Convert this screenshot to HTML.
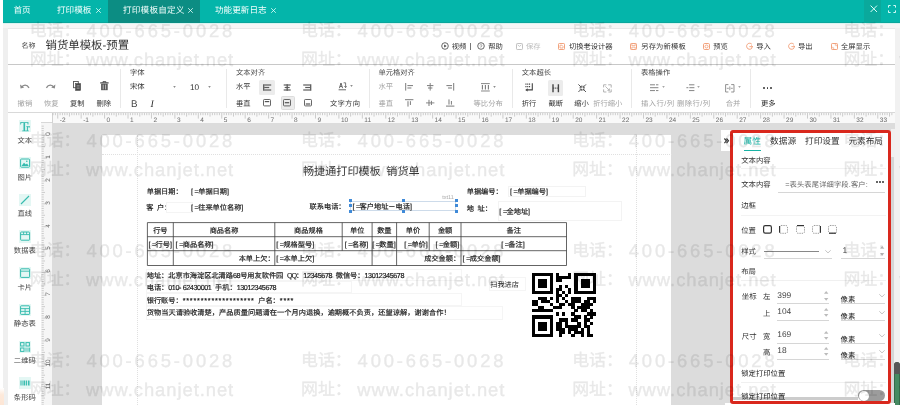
<!DOCTYPE html>
<html lang="zh-CN"><head><meta charset="utf-8"><title>print template designer</title>
<style>
html,body{margin:0;padding:0}
body{width:900px;height:405px;overflow:hidden;position:relative;background:#fff;font-family:"Liberation Sans",sans-serif;-webkit-font-smoothing:antialiased;text-rendering:geometricPrecision}
.t{position:absolute;white-space:nowrap;font-family:"Liberation Sans",sans-serif}
.b{position:absolute;box-sizing:border-box}
svg{overflow:visible}
#wrap{position:absolute;left:0;top:0;width:900px;height:405px;overflow:hidden;will-change:transform;opacity:0.999}
</style></head><body><div id="wrap">

<div class="b" style="left:3.00px;top:22.00px;width:897.00px;height:10.00px;background:#f6f6f6;"></div>
<div class="b" style="left:3.00px;top:28.00px;width:5.40px;height:377.00px;background:#efefef;"></div>
<div class="b" style="left:895.00px;top:28.00px;width:5.00px;height:377.00px;background:#f1f1f1;"></div>
<div class="b" style="left:3.00px;top:22.00px;width:897.00px;height:1.60px;background:#d8f4f1;"></div>
<div class="b" style="left:3.00px;top:0.00px;width:897.00px;height:22.60px;background:#04b5aa;"></div>
<div class="b" style="left:3.00px;top:21.70px;width:897.00px;height:0.90px;background:#0aa69b;"></div>
<div class="b" style="left:108.00px;top:0.00px;width:92.00px;height:22.60px;background:#0c8d83;"></div>
<div class="b" style="left:864.00px;top:0.00px;width:17.00px;height:22.60px;background:#0aa99c;"></div>
<span class="t" style="left:13.50px;top:4.48px;font-size:8.6px;line-height:12.04px;color:#f2fffd;">首页</span>
<span class="t" style="left:57.00px;top:4.48px;font-size:8.6px;line-height:12.04px;color:#f2fffd;">打印模板</span>
<svg class="b" style="left:96.10px;top:8.10px;" width="5" height="5" viewBox="0 0 5 5"><path d="M0.2 0.2 L4.8 4.8 M4.8 0.2 L0.2 4.8" stroke="#e4fffb" stroke-width="0.8" fill="none"/></svg>
<span class="t" style="left:123.00px;top:4.48px;font-size:8.6px;line-height:12.04px;color:#f2fffd;letter-spacing:0.2px;">打印模板自定义</span>
<svg class="b" style="left:187.80px;top:8.10px;" width="5" height="5" viewBox="0 0 5 5"><path d="M0.2 0.2 L4.8 4.8 M4.8 0.2 L0.2 4.8" stroke="#e4fffb" stroke-width="0.8" fill="none"/></svg>
<span class="t" style="left:215.00px;top:4.48px;font-size:8.6px;line-height:12.04px;color:#f2fffd;">功能更新日志</span>
<svg class="b" style="left:270.90px;top:8.10px;" width="5" height="5" viewBox="0 0 5 5"><path d="M0.2 0.2 L4.8 4.8 M4.8 0.2 L0.2 4.8" stroke="#e4fffb" stroke-width="0.8" fill="none"/></svg>
<svg class="b" style="left:869.60px;top:5.00px;" width="7.6" height="7.6" viewBox="0 0 7.6 7.6"><path d="M0.6 0.6 L7 7 M7 0.6 L0.6 7" stroke="#dcfffa" stroke-width="1" fill="none"/></svg>
<svg class="b" style="left:888.00px;top:4.60px;" width="8" height="8" viewBox="0 0 8 8"><path d="M0.5 2.6 V0.5 H2.6 M5.4 0.5 H7.5 V2.6 M7.5 5.4 V7.5 H5.4 M2.6 7.5 H0.5 V5.4" stroke="#d4fbf6" stroke-width="1" fill="none"/></svg>
<div class="b" style="left:8.00px;top:28.00px;width:887.00px;height:36.00px;background:#fff;border-top:1px solid #e9e9e9;"></div>
<span class="t" style="left:21.50px;top:42.40px;font-size:7px;line-height:9.8px;color:#444;">名称</span>
<span class="t" style="left:45.50px;top:39.12px;font-size:11.4px;line-height:15.96px;color:#333;">销货单模板-预置</span>
<svg class="b" style="left:441.00px;top:42.40px;" width="8" height="8" viewBox="0 0 8 8"><circle cx="4" cy="4" r="3.3" fill="none" stroke="#444" stroke-width="0.8"/><path d="M3.2 2.4 L5.6 4 L3.2 5.6 Z" fill="#444"/></svg>
<span class="t" style="left:451.80px;top:41.99px;font-size:7.3px;line-height:10.22px;color:#333;">视频</span>
<div class="b" style="left:470.30px;top:43.00px;width:0.90px;height:7.00px;background:#777;"></div>
<svg class="b" style="left:477.00px;top:42.40px;" width="8" height="8" viewBox="0 0 8 8"><circle cx="4" cy="4" r="3.3" fill="none" stroke="#444" stroke-width="0.8"/><text x="4" y="6" font-size="5.2" text-anchor="middle" font-family="Liberation Sans" fill="#444">?</text></svg>
<span class="t" style="left:488.20px;top:41.99px;font-size:7.3px;line-height:10.22px;color:#333;">帮助</span>
<svg class="b" style="left:515.50px;top:43.00px;" width="7" height="7" viewBox="0 0 7 7"><rect x="0.5" y="0.5" width="6" height="6" rx="0.8" fill="none" stroke="#bbb" stroke-width="0.9"/><path d="M1.6 1.8 L3.5 3.4 L5.4 1.8" fill="none" stroke="#bbb" stroke-width="0.8"/></svg>
<span class="t" style="left:526.00px;top:41.99px;font-size:7.3px;line-height:10.22px;color:#bbb;">保存</span>
<svg class="b" style="left:558.40px;top:43.00px;" width="7" height="7" viewBox="0 0 7 7"><rect x="0.5" y="0.5" width="6" height="6" rx="0.8" fill="none" stroke="#f1986f" stroke-width="0.9"/><path d="M2 2.2 H4 L5 3.2 V5 H2 Z" fill="none" stroke="#f1986f" stroke-width="0.7"/></svg>
<span class="t" style="left:568.90px;top:41.99px;font-size:7.3px;line-height:10.22px;color:#333;">切换老设计器</span>
<svg class="b" style="left:630.30px;top:43.00px;" width="7" height="7" viewBox="0 0 7 7"><rect x="0.5" y="0.5" width="6" height="6" rx="0.8" fill="none" stroke="#f1986f" stroke-width="0.9"/><path d="M1.8 0.8 V2.6 H5.2 V0.8 M1.8 6.2 V4.2 H5.2 V6.2" fill="none" stroke="#f1986f" stroke-width="0.7"/></svg>
<span class="t" style="left:641.20px;top:41.99px;font-size:7.3px;line-height:10.22px;color:#333;letter-spacing:0.15px;">另存为新模板</span>
<svg class="b" style="left:703.40px;top:43.00px;" width="7" height="7" viewBox="0 0 7 7"><rect x="0.5" y="0.5" width="6" height="6" rx="1.2" fill="none" stroke="#f1986f" stroke-width="0.9"/><circle cx="3.5" cy="3.5" r="1.5" fill="none" stroke="#f1986f" stroke-width="0.8"/></svg>
<span class="t" style="left:713.30px;top:41.99px;font-size:7.3px;line-height:10.22px;color:#333;">预览</span>
<svg class="b" style="left:746.00px;top:43.00px;" width="7" height="7" viewBox="0 0 7 7"><path d="M5.8 1.2 A3 3 0 1 0 6.3 4.6" fill="none" stroke="#f1986f" stroke-width="0.9"/><path d="M3.4 3.6 H6.6 M5.3 2.4 L6.6 3.6 L5.3 4.8" fill="none" stroke="#f1986f" stroke-width="0.8"/></svg>
<span class="t" style="left:756.30px;top:41.99px;font-size:7.3px;line-height:10.22px;color:#333;">导入</span>
<svg class="b" style="left:788.00px;top:43.00px;" width="7" height="7" viewBox="0 0 7 7"><path d="M5.8 1.2 A3 3 0 1 0 6.3 4.6" fill="none" stroke="#f1986f" stroke-width="0.9"/><path d="M3.4 3.6 H6.8 M5.5 2.4 L6.8 3.6 L5.5 4.8" fill="none" stroke="#f1986f" stroke-width="0.8"/></svg>
<span class="t" style="left:798.00px;top:41.99px;font-size:7.3px;line-height:10.22px;color:#333;">导出</span>
<svg class="b" style="left:831.00px;top:43.00px;" width="7" height="7" viewBox="0 0 7 7"><rect x="0.5" y="0.5" width="6" height="6" rx="0.8" fill="none" stroke="#f1986f" stroke-width="0.9"/><path d="M3.8 1.8 H5.2 V3.2 M3.2 5.2 H1.8 V3.8" fill="none" stroke="#f1986f" stroke-width="0.7"/></svg>
<span class="t" style="left:841.00px;top:41.99px;font-size:7.3px;line-height:10.22px;color:#333;">全屏显示</span>
<div class="b" style="left:8.00px;top:64.00px;width:887.00px;height:48.50px;background:#fff;border-top:1px solid #c8c8c8;border-bottom:1px solid #d9d9d9;"></div>
<div class="b" style="left:120.00px;top:69.00px;width:1.00px;height:39.00px;background:#e9e9e9;"></div>
<div class="b" style="left:226.00px;top:69.00px;width:1.00px;height:39.00px;background:#e9e9e9;"></div>
<div class="b" style="left:368.50px;top:69.00px;width:1.00px;height:39.00px;background:#e9e9e9;"></div>
<div class="b" style="left:512.00px;top:69.00px;width:1.00px;height:39.00px;background:#e9e9e9;"></div>
<div class="b" style="left:631.20px;top:69.00px;width:1.00px;height:39.00px;background:#e9e9e9;"></div>
<div class="b" style="left:750.20px;top:69.00px;width:1.00px;height:39.00px;background:#e9e9e9;"></div>
<svg class="b" style="left:20.40px;top:83.00px;" width="9.4" height="6" viewBox="0 0 9.4 6"><path d="M1.6 4.6 C3 1.4 7 1.2 9 4.8" fill="none" stroke="#8a8a8a" stroke-width="1.35"/><path d="M0 1.4 L0.6 5.6 L4.2 4.4 Z" fill="#8a8a8a"/></svg>
<svg class="b" style="left:46.40px;top:83.00px;" width="9.4" height="6" viewBox="0 0 9.4 6"><path d="M7.8 4.6 C6.4 1.4 2.4 1.2 0.4 4.8" fill="none" stroke="#8a8a8a" stroke-width="1.35"/><path d="M9.4 1.4 L8.8 5.6 L5.2 4.4 Z" fill="#8a8a8a"/></svg>
<svg class="b" style="left:73.20px;top:80.80px;" width="8" height="9.8" viewBox="0 0 8 9.8"><rect x="0.5" y="0.5" width="4.8" height="6.2" fill="#fff" stroke="#555" stroke-width="0.9"/><rect x="2.6" y="2.6" width="5" height="6.8" fill="#4a4a4a" stroke="#4a4a4a" stroke-width="0.6"/><path d="M3.6 4.6 H6.6 M3.6 6 H6.6 M3.6 7.4 H6.6" stroke="#ccc" stroke-width="0.5"/></svg>
<svg class="b" style="left:99.80px;top:81.20px;" width="8.8" height="9.4" viewBox="0 0 8.8 9.4"><path d="M0.2 1.9 H8.6" stroke="#333" stroke-width="1.1"/><path d="M3 1.6 V0.6 H5.8 V1.6" fill="none" stroke="#333" stroke-width="0.8"/><path d="M1.1 2.8 H7.7 V9.2 H1.1 Z" fill="#555"/><path d="M3.2 3.6 V8.4 M5.6 3.6 V8.4" stroke="#e8e8e8" stroke-width="0.7"/></svg>
<span class="t" style="left:17.60px;top:98.69px;font-size:7.3px;line-height:10.22px;color:#a2a2a2;">撤销</span>
<span class="t" style="left:44.00px;top:98.69px;font-size:7.3px;line-height:10.22px;color:#a2a2a2;">恢复</span>
<span class="t" style="left:70.00px;top:98.69px;font-size:7.3px;line-height:10.22px;color:#333;">复制</span>
<span class="t" style="left:96.50px;top:98.69px;font-size:7.3px;line-height:10.22px;color:#333;">删除</span>
<span class="t" style="left:130.00px;top:67.99px;font-size:7.3px;line-height:10.22px;color:#444;">字体</span>
<span class="t" style="left:130.00px;top:82.19px;font-size:7.3px;line-height:10.22px;color:#333;">宋体</span>
<svg class="b" style="left:173.10px;top:85.90px;" width="3" height="2" viewBox="0 0 3 2"><path d="M0.2 0.2 H2.8 L1.5 1.8 Z" fill="#666"/></svg>
<span class="t" style="left:190.00px;top:81.56px;font-size:8.2px;line-height:11.48px;color:#333;">10</span>
<svg class="b" style="left:207.90px;top:85.90px;" width="3" height="2" viewBox="0 0 3 2"><path d="M0.2 0.2 H2.8 L1.5 1.8 Z" fill="#666"/></svg>
<span class="t" style="left:131.00px;top:97.74px;font-size:9.8px;line-height:13.72px;color:#444;">B</span>
<span class="t" style="left:150.40px;top:97.60px;font-size:10px;line-height:14.0px;color:#333;font-family:'Liberation Serif',serif;font-style:italic;">I</span>
<span class="t" style="left:236.00px;top:67.99px;font-size:7.3px;line-height:10.22px;color:#444;">文本对齐</span>
<span class="t" style="left:236.00px;top:82.19px;font-size:7.3px;line-height:10.22px;color:#333;">水平</span>
<span class="t" style="left:236.00px;top:98.69px;font-size:7.3px;line-height:10.22px;color:#333;">垂直</span>
<div class="b" style="left:259.40px;top:79.60px;width:15.20px;height:15.00px;background:#ececec;border-radius:1.5px;"></div>
<div class="b" style="left:280.50px;top:95.50px;width:14.40px;height:14.40px;background:#ececec;border-radius:1.5px;border:0.5px solid #dcdcdc;"></div>
<svg class="b" style="left:262.80px;top:83.50px;" width="8.4" height="7" viewBox="0 0 8.4 7"><path d="M1.2 1.0 H8.2" stroke="#5c5c5c" stroke-width="1.2"/><path d="M1.2 3.5 H6.2" stroke="#5c5c5c" stroke-width="1.2"/><path d="M1.2 6.0 H8.2" stroke="#5c5c5c" stroke-width="1.2"/><path d="M0.7 0.2 V6.8" stroke="#5c5c5c" stroke-width="1.3"/></svg>
<svg class="b" style="left:283.00px;top:83.50px;" width="8.4" height="7" viewBox="0 0 8.4 7"><path d="M0.7 1.0 H7.7" stroke="#5c5c5c" stroke-width="1.2"/><path d="M1.7 3.5 H6.7" stroke="#5c5c5c" stroke-width="1.2"/><path d="M0.7 6.0 H7.7" stroke="#5c5c5c" stroke-width="1.2"/><path d="M4.2 0.2 V6.8" stroke="#5c5c5c" stroke-width="1.3"/></svg>
<svg class="b" style="left:303.00px;top:83.50px;" width="8.4" height="7" viewBox="0 0 8.4 7"><path d="M0.2 1.0 H7.2" stroke="#5c5c5c" stroke-width="1.2"/><path d="M2.2 3.5 H7.2" stroke="#5c5c5c" stroke-width="1.2"/><path d="M0.2 6.0 H7.2" stroke="#5c5c5c" stroke-width="1.2"/><path d="M7.7 0.2 V6.8" stroke="#5c5c5c" stroke-width="1.3"/></svg>
<svg class="b" style="left:262.80px;top:99.40px;" width="8" height="7.4" viewBox="0 0 8 7.4"><rect x="0.5" y="0.5" width="7" height="6.4" rx="0.8" fill="none" stroke="#555" stroke-width="0.9"/><path d="M1.8 2.6 H6.2" stroke="#555" stroke-width="1.2"/></svg>
<svg class="b" style="left:283.00px;top:99.40px;" width="8" height="7.4" viewBox="0 0 8 7.4"><rect x="0.5" y="0.5" width="7" height="6.4" rx="0.8" fill="none" stroke="#555" stroke-width="0.9"/><path d="M1.8 3.7 H6.2" stroke="#555" stroke-width="1.2"/></svg>
<svg class="b" style="left:303.60px;top:99.40px;" width="8" height="7.4" viewBox="0 0 8 7.4"><rect x="0.5" y="0.5" width="7" height="6.4" rx="0.8" fill="none" stroke="#555" stroke-width="0.9"/><path d="M1.8 5.0 H6.2" stroke="#555" stroke-width="1.2"/></svg>
<svg class="b" style="left:337.80px;top:82.20px;" width="8.6" height="8.6" viewBox="0 0 8.6 8.6"><path d="M0.6 7.8 H8 M1.4 6.2 L3 1 L4.6 6.2 M2 4.4 H4" fill="none" stroke="#444" stroke-width="0.8"/><path d="M5.6 0.8 H7.6 V5.4 M6.4 4.2 L7.6 5.6 L8.6 4.2" fill="none" stroke="#444" stroke-width="0.7"/></svg>
<svg class="b" style="left:349.50px;top:84.90px;" width="3" height="2" viewBox="0 0 3 2"><path d="M0.2 0.2 H2.8 L1.5 1.8 Z" fill="#666"/></svg>
<span class="t" style="left:330.00px;top:98.69px;font-size:7.3px;line-height:10.22px;color:#333;letter-spacing:0.25px;">文字方向</span>
<span class="t" style="left:378.40px;top:67.99px;font-size:7.3px;line-height:10.22px;color:#444;">单元格对齐</span>
<span class="t" style="left:378.40px;top:82.19px;font-size:7.3px;line-height:10.22px;color:#a2a2a2;">水平</span>
<span class="t" style="left:378.40px;top:98.69px;font-size:7.3px;line-height:10.22px;color:#a2a2a2;">垂直</span>
<svg class="b" style="left:405.30px;top:83.40px;" width="8.4" height="7.6" viewBox="0 0 8.4 7.6"><path d="M0.7 0 V7.6" stroke="#7a7a7a" stroke-width="1"/><path d="M2.4 2.6 H8 M2.4 5 H6.4" stroke="#7a7a7a" stroke-width="1"/></svg>
<svg class="b" style="left:425.80px;top:83.40px;" width="8.4" height="7.6" viewBox="0 0 8.4 7.6"><path d="M4.2 0 V7.6" stroke="#7a7a7a" stroke-width="0.9"/><path d="M1 2.6 H7.4 M2 5 H6.4" stroke="#7a7a7a" stroke-width="1"/></svg>
<svg class="b" style="left:446.20px;top:83.40px;" width="8.4" height="7.6" viewBox="0 0 8.4 7.6"><path d="M7.7 0 V7.6" stroke="#7a7a7a" stroke-width="1"/><path d="M0.4 2.6 H6 M2 5 H6" stroke="#7a7a7a" stroke-width="1"/></svg>
<svg class="b" style="left:405.30px;top:99.20px;" width="8.4" height="7.8" viewBox="0 0 8.4 7.8"><path d="M0 0.7 H8.4" stroke="#7a7a7a" stroke-width="1"/><path d="M3 2.2 V7.6 M5.4 2.2 V6" stroke="#7a7a7a" stroke-width="1"/></svg>
<svg class="b" style="left:425.80px;top:99.20px;" width="8.4" height="7.8" viewBox="0 0 8.4 7.8"><path d="M0 3.9 H8.4" stroke="#7a7a7a" stroke-width="0.9"/><path d="M3 0.8 V7 M5.4 1.8 V6" stroke="#7a7a7a" stroke-width="1"/></svg>
<svg class="b" style="left:446.20px;top:99.20px;" width="8.4" height="7.8" viewBox="0 0 8.4 7.8"><path d="M0 7.1 H8.4" stroke="#7a7a7a" stroke-width="1"/><path d="M3 0.4 V5.6 M5.4 2 V5.6" stroke="#7a7a7a" stroke-width="1"/></svg>
<svg class="b" style="left:481.00px;top:83.00px;" width="8.8" height="8.6" viewBox="0 0 8.8 8.6"><path d="M0 0.6 H8.8 M0 8 H8.8" stroke="#7a7a7a" stroke-width="0.9"/><path d="M1.4 2 V6.6 M4.4 2 V6.6 M7.4 2 V6.6" stroke="#7a7a7a" stroke-width="1.1"/></svg>
<svg class="b" style="left:492.90px;top:85.90px;" width="3" height="2" viewBox="0 0 3 2"><path d="M0.2 0.2 H2.8 L1.5 1.8 Z" fill="#666"/></svg>
<span class="t" style="left:473.40px;top:98.69px;font-size:7.3px;line-height:10.22px;color:#a2a2a2;letter-spacing:0.1px;">等比分布</span>
<span class="t" style="left:521.80px;top:67.99px;font-size:7.3px;line-height:10.22px;color:#444;">文本超长</span>
<svg class="b" style="left:524.70px;top:83.20px;" width="8.8" height="8.8" viewBox="0 0 8.8 8.8"><path d="M0.4 1.2 H5.4 M0.4 3.6 H5.4" fill="none" stroke="#444" stroke-width="1.2" stroke-dasharray="1.1 0.7"/><path d="M7.3 0.2 V6.9 H1.6" fill="none" stroke="#444" stroke-width="1.1"/><path d="M2.6 5.2 L0.2 6.9 L2.6 8.6 Z" fill="#444"/></svg>
<div class="b" style="left:547.90px;top:79.80px;width:15.20px;height:16.20px;background:#ececec;border-radius:1.5px;"></div>
<svg class="b" style="left:551.70px;top:83.70px;" width="7.4" height="8.4" viewBox="0 0 7.4 8.4"><path d="M1 0.2 V8.2 M6.4 0.2 V8.2" stroke="#444" stroke-width="1.4"/><path d="M1 4.1 H6.4" stroke="#444" stroke-width="1" stroke-dasharray="1.2 0.6"/></svg>
<svg class="b" style="left:577.50px;top:83.90px;" width="8.4" height="8.4" viewBox="0 0 8.4 8.4"><path d="M0.4 0.4 L3.2 3.2 M8 0.4 L5.2 3.2 M0.4 8 L3.2 5.2 M8 8 L5.2 5.2" stroke="#444" stroke-width="0.9"/><path d="M1.6 3.4 H3.4 V1.6 M6.8 3.4 H5 V1.6 M1.6 5 H3.4 V6.8 M6.8 5 H5 V6.8" fill="none" stroke="#444" stroke-width="0.8"/></svg>
<svg class="b" style="left:603.40px;top:83.50px;" width="9" height="9" viewBox="0 0 9 9"><path d="M0.6 3.4 V0.8 H3.4 M5.2 0.8 H8.2 V3.6 M8.2 5.4 V8 H5.4 M3.4 8 H0.6 V5.4" fill="none" stroke="#aaa" stroke-width="0.9"/><path d="M2.4 2.4 L6.4 6.4 M6.4 4.4 V6.4 H4.4" fill="none" stroke="#aaa" stroke-width="0.8"/></svg>
<span class="t" style="left:521.80px;top:98.69px;font-size:7.3px;line-height:10.22px;color:#333;">折行</span>
<span class="t" style="left:548.40px;top:98.69px;font-size:7.3px;line-height:10.22px;color:#333;">截断</span>
<span class="t" style="left:574.20px;top:98.69px;font-size:7.3px;line-height:10.22px;color:#333;">缩小</span>
<span class="t" style="left:593.20px;top:98.69px;font-size:7.3px;line-height:10.22px;color:#a2a2a2;">折行缩小</span>
<span class="t" style="left:641.00px;top:67.99px;font-size:7.3px;line-height:10.22px;color:#444;">表格操作</span>
<svg class="b" style="left:650.20px;top:83.60px;" width="8.6" height="7.4" viewBox="0 0 8.6 7.4"><path d="M0 0.8 H5 M6 0.8 H8.4 M0 3.7 H8.4 M0 6.6 H5 M6 6.6 H8.4" stroke="#858585" stroke-width="1"/></svg>
<svg class="b" style="left:662.10px;top:86.30px;" width="3" height="2" viewBox="0 0 3 2"><path d="M0.2 0.2 H2.8 L1.5 1.8 Z" fill="#888"/></svg>
<svg class="b" style="left:686.30px;top:83.60px;" width="8.6" height="7.4" viewBox="0 0 8.6 7.4"><path d="M3 0.8 H8.4 M0.4 3.7 H2.4 M3.4 3.7 H8.4 M3 6.6 H8.4" stroke="#858585" stroke-width="1"/></svg>
<svg class="b" style="left:697.10px;top:86.30px;" width="3" height="2" viewBox="0 0 3 2"><path d="M0.2 0.2 H2.8 L1.5 1.8 Z" fill="#888"/></svg>
<svg class="b" style="left:725.00px;top:84.10px;" width="9.6" height="8.6" viewBox="0 0 9.6 8.6"><path d="M3.4 0.6 H0.6 V8 H3.4 M6.2 0.6 H9 V8 H6.2" fill="none" stroke="#858585" stroke-width="0.9"/><path d="M1.8 4.3 H3.8 M5.8 4.3 H7.8 M4.8 2.4 V6.2" stroke="#858585" stroke-width="0.8"/></svg>
<svg class="b" style="left:737.70px;top:86.30px;" width="3" height="2" viewBox="0 0 3 2"><path d="M0.2 0.2 H2.8 L1.5 1.8 Z" fill="#888"/></svg>
<span class="t" style="left:641.00px;top:98.69px;font-size:7.3px;line-height:10.22px;color:#a2a2a2;letter-spacing:0.45px;">插入行/列</span>
<span class="t" style="left:677.00px;top:98.69px;font-size:7.3px;line-height:10.22px;color:#a2a2a2;letter-spacing:0.45px;">删除行/列</span>
<span class="t" style="left:725.80px;top:98.69px;font-size:7.3px;line-height:10.22px;color:#a2a2a2;">合并</span>
<div class="b" style="left:763.00px;top:87.00px;width:1.60px;height:1.60px;background:#333;border-radius:1px;"></div>
<div class="b" style="left:766.70px;top:87.00px;width:1.60px;height:1.60px;background:#333;border-radius:1px;"></div>
<div class="b" style="left:770.40px;top:87.00px;width:1.60px;height:1.60px;background:#333;border-radius:1px;"></div>
<span class="t" style="left:761.00px;top:98.69px;font-size:7.3px;line-height:10.22px;color:#222;">更多</span>
<div class="b" style="left:0.00px;top:388.00px;width:3.60px;height:17.00px;background:linear-gradient(to bottom,#ffffff,#fde9da 40%,#fde6d5);"></div>
<div class="b" style="left:8.00px;top:113.00px;width:33.00px;height:292.00px;background:#fff;"></div>
<div class="b" style="left:18.80px;top:120.20px;width:12.40px;height:12.20px;background:#e4f7f4;"></div>
<svg class="b" style="left:19.80px;top:121.20px;" width="10" height="10" viewBox="0 0 10 10"><text x="0.2" y="10.2" font-family="Liberation Serif" font-size="13.4" fill="#35bbae" stroke="#35bbae" stroke-width="0.25">T</text><text x="6.2" y="10.2" font-family="Liberation Serif" font-size="10.2" fill="#35bbae" stroke="#35bbae" stroke-width="0.3">r</text></svg>
<span class="t" style="left:24.80px;top:135.79px;font-size:7.3px;line-height:10.22px;color:#444;transform:translateX(-50%);">文本</span>
<div class="b" style="left:18.80px;top:156.92px;width:12.40px;height:12.20px;background:#e4f7f4;"></div>
<svg class="b" style="left:19.80px;top:157.92px;" width="10" height="10" viewBox="0 0 10 10"><rect x="0.6" y="1" width="9" height="8.2" rx="0.8" fill="none" stroke="#35bbae" stroke-width="1"/><path d="M1.4 8 L4 4.8 L5.8 6.6 L7 5.4 L8.8 8 Z" fill="#35bbae"/><circle cx="6.8" cy="3.2" r="0.8" fill="#35bbae"/></svg>
<span class="t" style="left:24.80px;top:172.51px;font-size:7.3px;line-height:10.22px;color:#444;transform:translateX(-50%);">图片</span>
<div class="b" style="left:18.80px;top:193.64px;width:12.40px;height:12.20px;background:#e4f7f4;"></div>
<svg class="b" style="left:19.80px;top:194.64px;" width="10" height="10" viewBox="0 0 10 10"><path d="M1 9 L9 1" stroke="#35bbae" stroke-width="1.1"/></svg>
<span class="t" style="left:24.80px;top:209.23px;font-size:7.3px;line-height:10.22px;color:#444;transform:translateX(-50%);">直线</span>
<div class="b" style="left:18.80px;top:230.36px;width:12.40px;height:12.20px;background:#e4f7f4;"></div>
<svg class="b" style="left:19.80px;top:231.36px;" width="10" height="10" viewBox="0 0 10 10"><rect x="0.6" y="1" width="9" height="8.2" rx="0.6" fill="none" stroke="#35bbae" stroke-width="1"/><path d="M0.6 3.6 H9.6 M3.6 1 V3.6 M6.6 1 V3.6" stroke="#35bbae" stroke-width="0.9"/></svg>
<span class="t" style="left:24.80px;top:245.95px;font-size:7.3px;line-height:10.22px;color:#444;transform:translateX(-50%);">数据表</span>
<div class="b" style="left:18.80px;top:267.08px;width:12.40px;height:12.20px;background:#e4f7f4;"></div>
<svg class="b" style="left:19.80px;top:268.08px;" width="10" height="10" viewBox="0 0 10 10"><rect x="0.6" y="0.8" width="9" height="8.6" rx="0.6" fill="none" stroke="#35bbae" stroke-width="1"/><path d="M0.6 3.2 H9.6" stroke="#35bbae" stroke-width="0.9"/></svg>
<span class="t" style="left:24.80px;top:282.67px;font-size:7.3px;line-height:10.22px;color:#444;transform:translateX(-50%);">卡片</span>
<div class="b" style="left:18.80px;top:303.80px;width:12.40px;height:12.20px;background:#e4f7f4;"></div>
<svg class="b" style="left:19.80px;top:304.80px;" width="10" height="10" viewBox="0 0 10 10"><rect x="0.6" y="0.8" width="9" height="8.6" rx="0.6" fill="none" stroke="#35bbae" stroke-width="1"/><path d="M0.6 3.6 H9.6 M0.6 6.4 H9.6 M5.1 3.6 V9.4" stroke="#35bbae" stroke-width="0.9"/></svg>
<span class="t" style="left:24.80px;top:319.39px;font-size:7.3px;line-height:10.22px;color:#444;transform:translateX(-50%);">静态表</span>
<div class="b" style="left:18.80px;top:340.52px;width:12.40px;height:12.20px;background:#e4f7f4;"></div>
<svg class="b" style="left:19.80px;top:341.52px;" width="10" height="10" viewBox="0 0 10 10"><rect x="0.6" y="0.6" width="3.4" height="3.4" fill="none" stroke="#35bbae" stroke-width="1"/><rect x="6" y="0.6" width="3.4" height="3.4" fill="none" stroke="#35bbae" stroke-width="1"/><rect x="0.6" y="6" width="3.4" height="3.4" fill="none" stroke="#35bbae" stroke-width="1"/><path d="M6 5.6 V9.8 M8 5.6 V9.8 M9.6 5.6 V9.8" stroke="#35bbae" stroke-width="0.9"/></svg>
<span class="t" style="left:24.80px;top:356.11px;font-size:7.3px;line-height:10.22px;color:#444;transform:translateX(-50%);">二维码</span>
<div class="b" style="left:18.80px;top:377.24px;width:12.40px;height:12.20px;background:#e4f7f4;"></div>
<svg class="b" style="left:19.80px;top:378.24px;" width="10" height="10" viewBox="0 0 10 10"><path d="M1 2.6 V7.6 M3 2.6 V7.6 M4.6 2.6 V7.6 M6.4 2.6 V7.6 M8.4 2.6 V7.6" stroke="#35bbae" stroke-width="1.1"/><path d="M9.6 2.6 V7.6" stroke="#35bbae" stroke-width="0.6"/></svg>
<span class="t" style="left:24.80px;top:392.83px;font-size:7.3px;line-height:10.22px;color:#444;transform:translateX(-50%);">条形码</span>
<div class="b" style="left:52.00px;top:112.50px;width:843.00px;height:10.90px;background:#f9f9f9;"></div>
<div class="b" style="left:41.00px;top:122.60px;width:11.20px;height:283.00px;background:#f6f6f6;"></div>
<div class="b" style="left:51.60px;top:113.00px;width:0.70px;height:10.30px;background:#d2d2d2;"></div>
<div class="b" style="left:41.00px;top:122.30px;width:11.00px;height:0.70px;background:#d8d8d8;"></div>
<svg class="b" style="left:0.00px;top:0.00px;" width="900" height="124" viewBox="0 0 900 124"><path d="M53.05 113 v2.2 M55.40 113 v2.2 M57.74 113 v5.6 M60.08 113 v2.2 M62.43 113 v2.2 M64.77 113 v2.2 M67.11 113 v2.2 M69.45 113 v3.6 M71.80 113 v2.2 M74.14 113 v2.2 M76.48 113 v2.2 M78.83 113 v2.2 M81.17 113 v5.6 M83.51 113 v2.2 M85.86 113 v2.2 M88.20 113 v2.2 M90.54 113 v2.2 M92.88 113 v3.6 M95.23 113 v2.2 M97.57 113 v2.2 M99.91 113 v2.2 M102.26 113 v2.2 M104.60 113 v5.6 M106.94 113 v2.2 M109.29 113 v2.2 M111.63 113 v2.2 M113.97 113 v2.2 M116.31 113 v3.6 M118.66 113 v2.2 M121.00 113 v2.2 M123.34 113 v2.2 M125.69 113 v2.2 M128.03 113 v5.6 M130.37 113 v2.2 M132.72 113 v2.2 M135.06 113 v2.2 M137.40 113 v2.2 M139.75 113 v3.6 M142.09 113 v2.2 M144.43 113 v2.2 M146.77 113 v2.2 M149.12 113 v2.2 M151.46 113 v5.6 M153.80 113 v2.2 M156.15 113 v2.2 M158.49 113 v2.2 M160.83 113 v2.2 M163.18 113 v3.6 M165.52 113 v2.2 M167.86 113 v2.2 M170.20 113 v2.2 M172.55 113 v2.2 M174.89 113 v5.6 M177.23 113 v2.2 M179.58 113 v2.2 M181.92 113 v2.2 M184.26 113 v2.2 M186.60 113 v3.6 M188.95 113 v2.2 M191.29 113 v2.2 M193.63 113 v2.2 M195.98 113 v2.2 M198.32 113 v5.6 M200.66 113 v2.2 M203.01 113 v2.2 M205.35 113 v2.2 M207.69 113 v2.2 M210.03 113 v3.6 M212.38 113 v2.2 M214.72 113 v2.2 M217.06 113 v2.2 M219.41 113 v2.2 M221.75 113 v5.6 M224.09 113 v2.2 M226.44 113 v2.2 M228.78 113 v2.2 M231.12 113 v2.2 M233.47 113 v3.6 M235.81 113 v2.2 M238.15 113 v2.2 M240.49 113 v2.2 M242.84 113 v2.2 M245.18 113 v5.6 M247.52 113 v2.2 M249.87 113 v2.2 M252.21 113 v2.2 M254.55 113 v2.2 M256.89 113 v3.6 M259.24 113 v2.2 M261.58 113 v2.2 M263.92 113 v2.2 M266.27 113 v2.2 M268.61 113 v5.6 M270.95 113 v2.2 M273.30 113 v2.2 M275.64 113 v2.2 M277.98 113 v2.2 M280.32 113 v3.6 M282.67 113 v2.2 M285.01 113 v2.2 M287.35 113 v2.2 M289.70 113 v2.2 M292.04 113 v5.6 M294.38 113 v2.2 M296.73 113 v2.2 M299.07 113 v2.2 M301.41 113 v2.2 M303.75 113 v3.6 M306.10 113 v2.2 M308.44 113 v2.2 M310.78 113 v2.2 M313.13 113 v2.2 M315.47 113 v5.6 M317.81 113 v2.2 M320.16 113 v2.2 M322.50 113 v2.2 M324.84 113 v2.2 M327.18 113 v3.6 M329.53 113 v2.2 M331.87 113 v2.2 M334.21 113 v2.2 M336.56 113 v2.2 M338.90 113 v5.6 M341.24 113 v2.2 M343.59 113 v2.2 M345.93 113 v2.2 M348.27 113 v2.2 M350.62 113 v3.6 M352.96 113 v2.2 M355.30 113 v2.2 M357.64 113 v2.2 M359.99 113 v2.2 M362.33 113 v5.6 M364.67 113 v2.2 M367.02 113 v2.2 M369.36 113 v2.2 M371.70 113 v2.2 M374.04 113 v3.6 M376.39 113 v2.2 M378.73 113 v2.2 M381.07 113 v2.2 M383.42 113 v2.2 M385.76 113 v5.6 M388.10 113 v2.2 M390.45 113 v2.2 M392.79 113 v2.2 M395.13 113 v2.2 M397.48 113 v3.6 M399.82 113 v2.2 M402.16 113 v2.2 M404.50 113 v2.2 M406.85 113 v2.2 M409.19 113 v5.6 M411.53 113 v2.2 M413.88 113 v2.2 M416.22 113 v2.2 M418.56 113 v2.2 M420.90 113 v3.6 M423.25 113 v2.2 M425.59 113 v2.2 M427.93 113 v2.2 M430.28 113 v2.2 M432.62 113 v5.6 M434.96 113 v2.2 M437.31 113 v2.2 M439.65 113 v2.2 M441.99 113 v2.2 M444.34 113 v3.6 M446.68 113 v2.2 M449.02 113 v2.2 M451.36 113 v2.2 M453.71 113 v2.2 M456.05 113 v5.6 M458.39 113 v2.2 M460.74 113 v2.2 M463.08 113 v2.2 M465.42 113 v2.2 M467.76 113 v3.6 M470.11 113 v2.2 M472.45 113 v2.2 M474.79 113 v2.2 M477.14 113 v2.2 M479.48 113 v5.6 M481.82 113 v2.2 M484.17 113 v2.2 M486.51 113 v2.2 M488.85 113 v2.2 M491.19 113 v3.6 M493.54 113 v2.2 M495.88 113 v2.2 M498.22 113 v2.2 M500.57 113 v2.2 M502.91 113 v5.6 M505.25 113 v2.2 M507.60 113 v2.2 M509.94 113 v2.2 M512.28 113 v2.2 M514.62 113 v3.6 M516.97 113 v2.2 M519.31 113 v2.2 M521.65 113 v2.2 M524.00 113 v2.2 M526.34 113 v5.6 M528.68 113 v2.2 M531.03 113 v2.2 M533.37 113 v2.2 M535.71 113 v2.2 M538.06 113 v3.6 M540.40 113 v2.2 M542.74 113 v2.2 M545.08 113 v2.2 M547.43 113 v2.2 M549.77 113 v5.6 M552.11 113 v2.2 M554.46 113 v2.2 M556.80 113 v2.2 M559.14 113 v2.2 M561.49 113 v3.6 M563.83 113 v2.2 M566.17 113 v2.2 M568.51 113 v2.2 M570.86 113 v2.2 M573.20 113 v5.6 M575.54 113 v2.2 M577.89 113 v2.2 M580.23 113 v2.2 M582.57 113 v2.2 M584.91 113 v3.6 M587.26 113 v2.2 M589.60 113 v2.2 M591.94 113 v2.2 M594.29 113 v2.2 M596.63 113 v5.6 M598.97 113 v2.2 M601.32 113 v2.2 M603.66 113 v2.2 M606.00 113 v2.2 M608.35 113 v3.6 M610.69 113 v2.2 M613.03 113 v2.2 M615.37 113 v2.2 M617.72 113 v2.2 M620.06 113 v5.6 M622.40 113 v2.2 M624.75 113 v2.2 M627.09 113 v2.2 M629.43 113 v2.2 M631.77 113 v3.6 M634.12 113 v2.2 M636.46 113 v2.2 M638.80 113 v2.2 M641.15 113 v2.2 M643.49 113 v5.6 M645.83 113 v2.2 M648.18 113 v2.2 M650.52 113 v2.2 M652.86 113 v2.2 M655.21 113 v3.6 M657.55 113 v2.2 M659.89 113 v2.2 M662.23 113 v2.2 M664.58 113 v2.2 M666.92 113 v5.6 M669.26 113 v2.2 M671.61 113 v2.2 M673.95 113 v2.2 M676.29 113 v2.2 M678.64 113 v3.6 M680.98 113 v2.2 M683.32 113 v2.2 M685.66 113 v2.2 M688.01 113 v2.2 M690.35 113 v5.6 M692.69 113 v2.2 M695.04 113 v2.2 M697.38 113 v2.2 M699.72 113 v2.2 M702.06 113 v3.6 M704.41 113 v2.2 M706.75 113 v2.2 M709.09 113 v2.2 M711.44 113 v2.2 M713.78 113 v5.6 M716.12 113 v2.2 M718.47 113 v2.2 M720.81 113 v2.2 M723.15 113 v2.2 M725.50 113 v3.6 M727.84 113 v2.2 M730.18 113 v2.2 M732.52 113 v2.2 M734.87 113 v2.2 M737.21 113 v5.6 M739.55 113 v2.2 M741.90 113 v2.2 M744.24 113 v2.2 M746.58 113 v2.2 M748.93 113 v3.6 M751.27 113 v2.2 M753.61 113 v2.2 M755.95 113 v2.2 M758.30 113 v2.2 M760.64 113 v5.6 M762.98 113 v2.2 M765.33 113 v2.2 M767.67 113 v2.2 M770.01 113 v2.2 M772.36 113 v3.6 M774.70 113 v2.2 M777.04 113 v2.2 M779.38 113 v2.2 M781.73 113 v2.2 M784.07 113 v5.6 M786.41 113 v2.2 M788.76 113 v2.2 M791.10 113 v2.2 M793.44 113 v2.2 M795.79 113 v3.6 M798.13 113 v2.2 M800.47 113 v2.2 M802.81 113 v2.2 M805.16 113 v2.2 M807.50 113 v5.6 M809.84 113 v2.2 M812.19 113 v2.2 M814.53 113 v2.2 M816.87 113 v2.2 M819.22 113 v3.6 M821.56 113 v2.2 M823.90 113 v2.2 M826.24 113 v2.2 M828.59 113 v2.2 M830.93 113 v5.6 M833.27 113 v2.2 M835.62 113 v2.2 M837.96 113 v2.2 M840.30 113 v2.2 M842.64 113 v3.6 M844.99 113 v2.2 M847.33 113 v2.2 M849.67 113 v2.2 M852.02 113 v2.2 M854.36 113 v5.6 M856.70 113 v2.2 M859.05 113 v2.2 M861.39 113 v2.2 M863.73 113 v2.2 M866.08 113 v3.6 M868.42 113 v2.2 M870.76 113 v2.2 M873.10 113 v2.2 M875.45 113 v2.2 M877.79 113 v5.6 M880.13 113 v2.2 M882.48 113 v2.2 M884.82 113 v2.2 M887.16 113 v2.2 M889.50 113 v3.6 M891.85 113 v2.2" stroke="#b9b9b9" stroke-width="0.7" fill="none"/></svg>
<span class="t" style="left:59.74px;top:116.15px;font-size:6.5px;line-height:9.1px;color:#6a6a6a;">-2</span>
<span class="t" style="left:83.17px;top:116.15px;font-size:6.5px;line-height:9.1px;color:#6a6a6a;">-1</span>
<span class="t" style="left:106.60px;top:116.15px;font-size:6.5px;line-height:9.1px;color:#6a6a6a;">0</span>
<span class="t" style="left:130.03px;top:116.15px;font-size:6.5px;line-height:9.1px;color:#6a6a6a;">1</span>
<span class="t" style="left:153.46px;top:116.15px;font-size:6.5px;line-height:9.1px;color:#6a6a6a;">2</span>
<span class="t" style="left:176.89px;top:116.15px;font-size:6.5px;line-height:9.1px;color:#6a6a6a;">3</span>
<span class="t" style="left:200.32px;top:116.15px;font-size:6.5px;line-height:9.1px;color:#6a6a6a;">4</span>
<span class="t" style="left:223.75px;top:116.15px;font-size:6.5px;line-height:9.1px;color:#6a6a6a;">5</span>
<span class="t" style="left:247.18px;top:116.15px;font-size:6.5px;line-height:9.1px;color:#6a6a6a;">6</span>
<span class="t" style="left:270.61px;top:116.15px;font-size:6.5px;line-height:9.1px;color:#6a6a6a;">7</span>
<span class="t" style="left:294.04px;top:116.15px;font-size:6.5px;line-height:9.1px;color:#6a6a6a;">8</span>
<span class="t" style="left:317.47px;top:116.15px;font-size:6.5px;line-height:9.1px;color:#6a6a6a;">9</span>
<span class="t" style="left:340.90px;top:116.15px;font-size:6.5px;line-height:9.1px;color:#6a6a6a;">10</span>
<span class="t" style="left:364.33px;top:116.15px;font-size:6.5px;line-height:9.1px;color:#6a6a6a;">11</span>
<span class="t" style="left:387.76px;top:116.15px;font-size:6.5px;line-height:9.1px;color:#6a6a6a;">12</span>
<span class="t" style="left:411.19px;top:116.15px;font-size:6.5px;line-height:9.1px;color:#6a6a6a;">13</span>
<span class="t" style="left:434.62px;top:116.15px;font-size:6.5px;line-height:9.1px;color:#6a6a6a;">14</span>
<span class="t" style="left:458.05px;top:116.15px;font-size:6.5px;line-height:9.1px;color:#6a6a6a;">15</span>
<span class="t" style="left:481.48px;top:116.15px;font-size:6.5px;line-height:9.1px;color:#6a6a6a;">16</span>
<span class="t" style="left:504.91px;top:116.15px;font-size:6.5px;line-height:9.1px;color:#6a6a6a;">17</span>
<span class="t" style="left:528.34px;top:116.15px;font-size:6.5px;line-height:9.1px;color:#6a6a6a;">18</span>
<span class="t" style="left:551.77px;top:116.15px;font-size:6.5px;line-height:9.1px;color:#6a6a6a;">19</span>
<span class="t" style="left:575.20px;top:116.15px;font-size:6.5px;line-height:9.1px;color:#6a6a6a;">20</span>
<span class="t" style="left:598.63px;top:116.15px;font-size:6.5px;line-height:9.1px;color:#6a6a6a;">21</span>
<span class="t" style="left:622.06px;top:116.15px;font-size:6.5px;line-height:9.1px;color:#6a6a6a;">22</span>
<span class="t" style="left:645.49px;top:116.15px;font-size:6.5px;line-height:9.1px;color:#6a6a6a;">23</span>
<span class="t" style="left:668.92px;top:116.15px;font-size:6.5px;line-height:9.1px;color:#6a6a6a;">24</span>
<span class="t" style="left:692.35px;top:116.15px;font-size:6.5px;line-height:9.1px;color:#6a6a6a;">25</span>
<span class="t" style="left:715.78px;top:116.15px;font-size:6.5px;line-height:9.1px;color:#6a6a6a;">26</span>
<span class="t" style="left:739.21px;top:116.15px;font-size:6.5px;line-height:9.1px;color:#6a6a6a;">27</span>
<span class="t" style="left:762.64px;top:116.15px;font-size:6.5px;line-height:9.1px;color:#6a6a6a;">28</span>
<span class="t" style="left:786.07px;top:116.15px;font-size:6.5px;line-height:9.1px;color:#6a6a6a;">29</span>
<span class="t" style="left:809.50px;top:116.15px;font-size:6.5px;line-height:9.1px;color:#6a6a6a;">30</span>
<span class="t" style="left:832.93px;top:116.15px;font-size:6.5px;line-height:9.1px;color:#6a6a6a;">31</span>
<span class="t" style="left:856.36px;top:116.15px;font-size:6.5px;line-height:9.1px;color:#6a6a6a;">32</span>
<span class="t" style="left:879.79px;top:116.15px;font-size:6.5px;line-height:9.1px;color:#6a6a6a;">33</span>
<svg class="b" style="left:0.00px;top:0.00px;" width="60" height="405" viewBox="0 0 60 405"><path d="M41.6 126.16 h2.2 M41.6 128.45 h2.2 M41.6 130.73 h2.2 M41.6 133.02 h2.2 M41.6 135.30 h5.0 M41.6 137.59 h2.2 M41.6 139.87 h2.2 M41.6 142.16 h2.2 M41.6 144.44 h2.2 M41.6 146.73 h3.4 M41.6 149.01 h2.2 M41.6 151.30 h2.2 M41.6 153.58 h2.2 M41.6 155.87 h2.2 M41.6 158.15 h5.0 M41.6 160.44 h2.2 M41.6 162.72 h2.2 M41.6 165.01 h2.2 M41.6 167.29 h2.2 M41.6 169.58 h3.4 M41.6 171.86 h2.2 M41.6 174.15 h2.2 M41.6 176.43 h2.2 M41.6 178.72 h2.2 M41.6 181.00 h5.0 M41.6 183.29 h2.2 M41.6 185.57 h2.2 M41.6 187.86 h2.2 M41.6 190.14 h2.2 M41.6 192.43 h3.4 M41.6 194.71 h2.2 M41.6 197.00 h2.2 M41.6 199.28 h2.2 M41.6 201.57 h2.2 M41.6 203.85 h5.0 M41.6 206.14 h2.2 M41.6 208.42 h2.2 M41.6 210.71 h2.2 M41.6 212.99 h2.2 M41.6 215.28 h3.4 M41.6 217.56 h2.2 M41.6 219.85 h2.2 M41.6 222.13 h2.2 M41.6 224.42 h2.2 M41.6 226.70 h5.0 M41.6 228.99 h2.2 M41.6 231.27 h2.2 M41.6 233.56 h2.2 M41.6 235.84 h2.2 M41.6 238.12 h3.4 M41.6 240.41 h2.2 M41.6 242.70 h2.2 M41.6 244.98 h2.2 M41.6 247.27 h2.2 M41.6 249.55 h5.0 M41.6 251.84 h2.2 M41.6 254.12 h2.2 M41.6 256.41 h2.2 M41.6 258.69 h2.2 M41.6 260.98 h3.4 M41.6 263.26 h2.2 M41.6 265.55 h2.2 M41.6 267.83 h2.2 M41.6 270.12 h2.2 M41.6 272.40 h5.0 M41.6 274.69 h2.2 M41.6 276.97 h2.2 M41.6 279.25 h2.2 M41.6 281.54 h2.2 M41.6 283.83 h3.4 M41.6 286.11 h2.2 M41.6 288.39 h2.2 M41.6 290.68 h2.2 M41.6 292.97 h2.2 M41.6 295.25 h5.0 M41.6 297.54 h2.2 M41.6 299.82 h2.2 M41.6 302.11 h2.2 M41.6 304.39 h2.2 M41.6 306.68 h3.4 M41.6 308.96 h2.2 M41.6 311.25 h2.2 M41.6 313.53 h2.2 M41.6 315.82 h2.2 M41.6 318.10 h5.0 M41.6 320.38 h2.2 M41.6 322.67 h2.2 M41.6 324.96 h2.2 M41.6 327.24 h2.2 M41.6 329.53 h3.4 M41.6 331.81 h2.2 M41.6 334.10 h2.2 M41.6 336.38 h2.2 M41.6 338.67 h2.2 M41.6 340.95 h5.0 M41.6 343.24 h2.2 M41.6 345.52 h2.2 M41.6 347.81 h2.2 M41.6 350.09 h2.2 M41.6 352.38 h3.4 M41.6 354.66 h2.2 M41.6 356.95 h2.2 M41.6 359.23 h2.2 M41.6 361.51 h2.2 M41.6 363.80 h5.0 M41.6 366.09 h2.2 M41.6 368.37 h2.2 M41.6 370.66 h2.2 M41.6 372.94 h2.2 M41.6 375.23 h3.4 M41.6 377.51 h2.2 M41.6 379.80 h2.2 M41.6 382.08 h2.2 M41.6 384.37 h2.2 M41.6 386.65 h5.0 M41.6 388.94 h2.2 M41.6 391.22 h2.2 M41.6 393.51 h2.2 M41.6 395.79 h2.2 M41.6 398.07 h3.4 M41.6 400.36 h2.2 M41.6 402.65 h2.2 M41.6 404.93 h2.2" stroke="#b9b9b9" stroke-width="0.7" fill="none"/></svg>
<span class="t" style="left:48.6px;top:134.20px;font-size:6.4px;line-height:6.6px;color:#666;transform:translate(-50%,-50%) rotate(-90deg);">0</span>
<span class="t" style="left:48.6px;top:157.05px;font-size:6.4px;line-height:6.6px;color:#666;transform:translate(-50%,-50%) rotate(-90deg);">1</span>
<span class="t" style="left:48.6px;top:179.90px;font-size:6.4px;line-height:6.6px;color:#666;transform:translate(-50%,-50%) rotate(-90deg);">2</span>
<span class="t" style="left:48.6px;top:202.75px;font-size:6.4px;line-height:6.6px;color:#666;transform:translate(-50%,-50%) rotate(-90deg);">3</span>
<span class="t" style="left:48.6px;top:225.60px;font-size:6.4px;line-height:6.6px;color:#666;transform:translate(-50%,-50%) rotate(-90deg);">4</span>
<span class="t" style="left:48.6px;top:248.45px;font-size:6.4px;line-height:6.6px;color:#666;transform:translate(-50%,-50%) rotate(-90deg);">5</span>
<span class="t" style="left:48.6px;top:271.30px;font-size:6.4px;line-height:6.6px;color:#666;transform:translate(-50%,-50%) rotate(-90deg);">6</span>
<span class="t" style="left:48.6px;top:294.15px;font-size:6.4px;line-height:6.6px;color:#666;transform:translate(-50%,-50%) rotate(-90deg);">7</span>
<span class="t" style="left:48.6px;top:317.00px;font-size:6.4px;line-height:6.6px;color:#666;transform:translate(-50%,-50%) rotate(-90deg);">8</span>
<span class="t" style="left:48.6px;top:339.85px;font-size:6.4px;line-height:6.6px;color:#666;transform:translate(-50%,-50%) rotate(-90deg);">9</span>
<span class="t" style="left:48.6px;top:362.70px;font-size:6.4px;line-height:6.6px;color:#666;transform:translate(-50%,-50%) rotate(-90deg);">10</span>
<span class="t" style="left:48.6px;top:385.55px;font-size:6.4px;line-height:6.6px;color:#666;transform:translate(-50%,-50%) rotate(-90deg);">11</span>
<div class="b" style="left:52.20px;top:123.40px;width:842.80px;height:282.00px;background:#dcdcdc;"></div>
<div class="b" style="left:101.80px;top:135.40px;width:569.40px;height:270.00px;background:#fff;"></div>
<div class="b" style="left:101.8px;top:154px;width:570px;height:0;border-top:1px dotted #e0e0e0;"></div>
<div class="b" style="left:136.6px;top:135.3px;width:0;height:270px;border-left:1px dotted #e0e0e0;"></div>
<div class="b" style="left:635.8px;top:135.3px;width:0;height:270px;border-left:1px dotted #e0e0e0;"></div>
<span class="t" style="left:303.00px;top:164.93px;font-size:11.1px;line-height:15.54px;color:#3a3a3a;word-spacing:2.6px;">畅捷通打印模板 销货单</span>
<span class="t" style="left:146.70px;top:187.26px;font-size:7.2px;line-height:10.08px;color:#1a1a1a;-webkit-text-stroke:0.18px #1a1a1a;">单据日期：</span>
<span class="t" style="left:191.00px;top:187.26px;font-size:7.2px;line-height:10.08px;color:#1a1a1a;-webkit-text-stroke:0.18px #1a1a1a;"><span style="letter-spacing:1.60px">[</span><span style="letter-spacing:-0.60px">=</span>单据日期<span style="letter-spacing:1.60px">]</span></span>
<span class="t" style="left:146.20px;top:202.86px;font-size:7.2px;line-height:10.08px;color:#1a1a1a;-webkit-text-stroke:0.18px #1a1a1a;">客<span style="letter-spacing:1.60px">&nbsp;</span>户：</span>
<div class="b" style="left:166.00px;top:202.00px;width:27.00px;height:11.00px;border:0.5px solid #f4f4f4;"></div>
<span class="t" style="left:191.00px;top:202.86px;font-size:7.2px;line-height:10.08px;color:#1a1a1a;-webkit-text-stroke:0.18px #1a1a1a;"><span style="letter-spacing:1.60px">[</span><span style="letter-spacing:-0.60px">=</span>往来单位名称<span style="letter-spacing:1.60px">]</span></span>
<span class="t" style="left:309.60px;top:202.36px;font-size:7.2px;line-height:10.08px;color:#1a1a1a;-webkit-text-stroke:0.18px #1a1a1a;">联系电话：</span>
<div class="b" style="left:350.40px;top:200.60px;width:105.80px;height:10.60px;border:0.6px solid #cddbea;"></div>
<span class="t" style="left:352.40px;top:202.36px;font-size:7.2px;line-height:10.08px;color:#1a1a1a;-webkit-text-stroke:0.18px #1a1a1a;"><span style="letter-spacing:1.60px">[</span><span style="letter-spacing:-0.60px">=</span>客户地址－电话<span style="letter-spacing:1.60px">]</span></span>
<div class="b" style="left:348.90px;top:199.10px;width:3.00px;height:3.00px;background:#3f8ad8;"></div>
<div class="b" style="left:348.90px;top:204.40px;width:3.00px;height:3.00px;background:#3f8ad8;"></div>
<div class="b" style="left:348.90px;top:209.70px;width:3.00px;height:3.00px;background:#3f8ad8;"></div>
<div class="b" style="left:401.80px;top:199.10px;width:3.00px;height:3.00px;background:#3f8ad8;"></div>
<div class="b" style="left:401.80px;top:209.70px;width:3.00px;height:3.00px;background:#3f8ad8;"></div>
<div class="b" style="left:454.70px;top:199.10px;width:3.00px;height:3.00px;background:#3f8ad8;"></div>
<div class="b" style="left:454.70px;top:204.40px;width:3.00px;height:3.00px;background:#3f8ad8;"></div>
<div class="b" style="left:454.70px;top:209.70px;width:3.00px;height:3.00px;background:#3f8ad8;"></div>
<span class="t" style="left:442.20px;top:195.08px;font-size:5.6px;line-height:7.84px;color:#adadad;">txt11</span>
<span class="t" style="left:466.70px;top:187.26px;font-size:7.2px;line-height:10.08px;color:#1a1a1a;-webkit-text-stroke:0.18px #1a1a1a;">单据编号：</span>
<div class="b" style="left:508.20px;top:186.00px;width:77.80px;height:11.20px;border:0.5px solid #f3f3f3;"></div>
<span class="t" style="left:510.00px;top:186.76px;font-size:7.2px;line-height:10.08px;color:#1a1a1a;-webkit-text-stroke:0.18px #1a1a1a;"><span style="letter-spacing:1.60px">[</span><span style="letter-spacing:-0.60px">=</span>单据编号<span style="letter-spacing:1.60px">]</span></span>
<span class="t" style="left:466.70px;top:203.86px;font-size:7.2px;line-height:10.08px;color:#1a1a1a;-webkit-text-stroke:0.18px #1a1a1a;">地<span style="letter-spacing:1.60px">&nbsp;</span>址：</span>
<div class="b" style="left:497.80px;top:200.60px;width:123.80px;height:20.60px;border:0.5px solid #f3f3f3;"></div>
<span class="t" style="left:499.30px;top:206.76px;font-size:7.2px;line-height:10.08px;color:#1a1a1a;-webkit-text-stroke:0.18px #1a1a1a;"><span style="letter-spacing:1.60px">[</span><span style="letter-spacing:-0.60px">=</span>全地址<span style="letter-spacing:1.60px">]</span></span>
<svg class="b" style="left:0.00px;top:0.00px;" width="900" height="405" viewBox="0 0 900 405"><path d="M147.4 222.6 H566.5 V265.5 H147.4 Z M147.4 236.7 H566.5 M147.4 250.7 H566.5 M173.3 222.6 V265.5 M274.8 222.6 V265.5 M372.1 222.6 V265.5 M396.6 222.6 V265.5 M461 222.6 V265.5 M342.2 222.6 V250.7 M429.2 222.6 V250.7" stroke="#3c3c3c" stroke-width="0.8" fill="none"/></svg>
<span class="t" style="left:160.35px;top:225.56px;font-size:7.2px;line-height:10.08px;color:#1a1a1a;-webkit-text-stroke:0.18px #1a1a1a;transform:translateX(-50%);">行号</span>
<span class="t" style="left:224.05px;top:225.56px;font-size:7.2px;line-height:10.08px;color:#1a1a1a;-webkit-text-stroke:0.18px #1a1a1a;transform:translateX(-50%);">商品名称</span>
<span class="t" style="left:308.50px;top:225.56px;font-size:7.2px;line-height:10.08px;color:#1a1a1a;-webkit-text-stroke:0.18px #1a1a1a;transform:translateX(-50%);">商品规格</span>
<span class="t" style="left:357.15px;top:225.56px;font-size:7.2px;line-height:10.08px;color:#1a1a1a;-webkit-text-stroke:0.18px #1a1a1a;transform:translateX(-50%);">单位</span>
<span class="t" style="left:384.35px;top:225.56px;font-size:7.2px;line-height:10.08px;color:#1a1a1a;-webkit-text-stroke:0.18px #1a1a1a;transform:translateX(-50%);">数量</span>
<span class="t" style="left:412.90px;top:225.56px;font-size:7.2px;line-height:10.08px;color:#1a1a1a;-webkit-text-stroke:0.18px #1a1a1a;transform:translateX(-50%);">单价</span>
<span class="t" style="left:445.10px;top:225.56px;font-size:7.2px;line-height:10.08px;color:#1a1a1a;-webkit-text-stroke:0.18px #1a1a1a;transform:translateX(-50%);">金额</span>
<span class="t" style="left:513.75px;top:225.56px;font-size:7.2px;line-height:10.08px;color:#1a1a1a;-webkit-text-stroke:0.18px #1a1a1a;transform:translateX(-50%);">备注</span>
<span class="t" style="left:148.40px;top:239.56px;font-size:7.2px;line-height:10.08px;color:#1a1a1a;-webkit-text-stroke:0.18px #1a1a1a;"><span style="letter-spacing:1.60px">[</span><span style="letter-spacing:-0.60px">=</span>行号<span style="letter-spacing:1.60px">]</span></span>
<span class="t" style="left:175.60px;top:239.56px;font-size:7.2px;line-height:10.08px;color:#1a1a1a;-webkit-text-stroke:0.18px #1a1a1a;"><span style="letter-spacing:1.60px">[</span><span style="letter-spacing:-0.60px">=</span>商品名称<span style="letter-spacing:1.60px">]</span></span>
<span class="t" style="left:276.20px;top:239.56px;font-size:7.2px;line-height:10.08px;color:#1a1a1a;-webkit-text-stroke:0.18px #1a1a1a;"><span style="letter-spacing:1.60px">[</span><span style="letter-spacing:-0.60px">=</span>规格型号<span style="letter-spacing:1.60px">]</span></span>
<span class="t" style="left:357.35px;top:239.56px;font-size:7.2px;line-height:10.08px;color:#1a1a1a;-webkit-text-stroke:0.18px #1a1a1a;transform:translateX(-50%);"><span style="letter-spacing:1.60px">[</span><span style="letter-spacing:-0.60px">=</span>名称<span style="letter-spacing:1.60px">]</span></span>
<span class="t" style="left:384.75px;top:239.56px;font-size:7.2px;line-height:10.08px;color:#1a1a1a;-webkit-text-stroke:0.18px #1a1a1a;transform:translateX(-50%);"><span style="letter-spacing:1.60px">[</span><span style="letter-spacing:-0.60px">=</span>数量<span style="letter-spacing:1.60px">]</span></span>
<span class="t" style="left:429.40px;top:239.56px;font-size:7.2px;line-height:10.08px;color:#1a1a1a;-webkit-text-stroke:0.18px #1a1a1a;transform:translateX(-100%);"><span style="letter-spacing:1.60px">[</span><span style="letter-spacing:-0.60px">=</span>单价<span style="letter-spacing:1.60px">]</span></span>
<span class="t" style="left:460.80px;top:239.56px;font-size:7.2px;line-height:10.08px;color:#1a1a1a;-webkit-text-stroke:0.18px #1a1a1a;transform:translateX(-100%);"><span style="letter-spacing:1.60px">[</span><span style="letter-spacing:-0.60px">=</span>金额<span style="letter-spacing:1.60px">]</span></span>
<span class="t" style="left:513.75px;top:239.56px;font-size:7.2px;line-height:10.08px;color:#1a1a1a;-webkit-text-stroke:0.18px #1a1a1a;transform:translateX(-50%);"><span style="letter-spacing:1.60px">[</span><span style="letter-spacing:-0.60px">=</span>备注<span style="letter-spacing:1.60px">]</span></span>
<span class="t" style="left:274.60px;top:253.76px;font-size:7.2px;line-height:10.08px;color:#1a1a1a;-webkit-text-stroke:0.18px #1a1a1a;transform:translateX(-100%);">本单上欠：</span>
<span class="t" style="left:276.20px;top:253.76px;font-size:7.2px;line-height:10.08px;color:#1a1a1a;-webkit-text-stroke:0.18px #1a1a1a;"><span style="letter-spacing:1.60px">[</span><span style="letter-spacing:-0.60px">=</span>本单上欠<span style="letter-spacing:1.60px">]</span></span>
<span class="t" style="left:460.20px;top:253.76px;font-size:7.2px;line-height:10.08px;color:#1a1a1a;-webkit-text-stroke:0.18px #1a1a1a;transform:translateX(-100%);">成交金额：</span>
<span class="t" style="left:462.60px;top:253.76px;font-size:7.2px;line-height:10.08px;color:#1a1a1a;-webkit-text-stroke:0.18px #1a1a1a;"><span style="letter-spacing:1.60px">[</span><span style="letter-spacing:-0.60px">=</span>成交金额<span style="letter-spacing:1.60px">]</span></span>
<span class="t" style="left:146.70px;top:270.76px;font-size:7.2px;line-height:10.08px;color:#1a1a1a;-webkit-text-stroke:0.18px #1a1a1a;">地址：北京市海淀区北清路<span style="letter-spacing:-0.40px">68</span>号用友软件园<span style="letter-spacing:1.60px">&nbsp;</span><span style="letter-spacing:-1.00px">QQ</span>：<span style="letter-spacing:-0.40px">12345678</span><span style="letter-spacing:1.60px">&nbsp;</span>微信号：<span style="letter-spacing:-0.40px">13012345678</span></span>
<span class="t" style="left:146.70px;top:282.86px;font-size:7.2px;line-height:10.08px;color:#1a1a1a;-webkit-text-stroke:0.18px #1a1a1a;">电话：<span style="letter-spacing:-0.40px">010</span><span style="letter-spacing:1.20px">-</span><span style="letter-spacing:-0.40px">62430001</span><span style="letter-spacing:1.60px">&nbsp;</span>手机：<span style="letter-spacing:-0.40px">13012345678</span></span>
<span class="t" style="left:146.70px;top:295.56px;font-size:7.2px;line-height:10.08px;color:#1a1a1a;-webkit-text-stroke:0.18px #1a1a1a;">银行账号：<span style="letter-spacing:0.80px">********************</span><span style="letter-spacing:1.60px">&nbsp;</span>户名：<span style="letter-spacing:0.80px">****</span></span>
<span class="t" style="left:146.70px;top:308.36px;font-size:7.2px;line-height:10.08px;color:#1a1a1a;-webkit-text-stroke:0.18px #1a1a1a;letter-spacing:0.05px;">货物当天请验收清楚，产品质量问题请在一个月内退换，逾期概不负责，还望谅解，谢谢合作！</span>
<div class="b" style="left:145.50px;top:268.60px;width:316.00px;height:12.20px;border:0.5px solid #f5f5f5;"></div>
<div class="b" style="left:145.50px;top:280.80px;width:206.00px;height:12.40px;border:0.5px solid #f5f5f5;"></div>
<div class="b" style="left:145.50px;top:293.40px;width:316.00px;height:12.60px;border:0.5px solid #f5f5f5;"></div>
<div class="b" style="left:145.50px;top:306.00px;width:357.40px;height:13.60px;border:0.5px solid #f5f5f5;"></div>
<div class="b" style="left:489.00px;top:276.70px;width:37.00px;height:14.20px;border:0.5px solid #f5f5f5;"></div>
<span class="t" style="left:490.30px;top:279.80px;font-size:7.15px;line-height:10.01px;color:#222;">扫我进店</span>
<svg class="b" style="left:532.00px;top:273.40px;" width="64" height="64" viewBox="0 0 64 64"><path d="M0.00 0.00 h21.28 v3.08 h-21.28 Z M24.26 0.00 h3.08 v3.08 h-3.08 Z M36.40 0.00 h3.08 v3.08 h-3.08 Z M42.46 0.00 h21.28 v3.08 h-21.28 Z M0.00 3.03 h3.08 v3.08 h-3.08 Z M18.20 3.03 h3.08 v3.08 h-3.08 Z M24.26 3.03 h15.21 v3.08 h-15.21 Z M42.46 3.03 h3.08 v3.08 h-3.08 Z M60.66 3.03 h3.08 v3.08 h-3.08 Z M0.00 6.07 h3.08 v3.08 h-3.08 Z M6.07 6.07 h9.15 v3.08 h-9.15 Z M18.20 6.07 h3.08 v3.08 h-3.08 Z M24.26 6.07 h6.12 v3.08 h-6.12 Z M42.46 6.07 h3.08 v3.08 h-3.08 Z M48.53 6.07 h9.15 v3.08 h-9.15 Z M60.66 6.07 h3.08 v3.08 h-3.08 Z M0.00 9.10 h3.08 v3.08 h-3.08 Z M6.07 9.10 h9.15 v3.08 h-9.15 Z M18.20 9.10 h3.08 v3.08 h-3.08 Z M42.46 9.10 h3.08 v3.08 h-3.08 Z M48.53 9.10 h9.15 v3.08 h-9.15 Z M60.66 9.10 h3.08 v3.08 h-3.08 Z M0.00 12.13 h3.08 v3.08 h-3.08 Z M6.07 12.13 h9.15 v3.08 h-9.15 Z M18.20 12.13 h3.08 v3.08 h-3.08 Z M27.30 12.13 h3.08 v3.08 h-3.08 Z M33.36 12.13 h3.08 v3.08 h-3.08 Z M42.46 12.13 h3.08 v3.08 h-3.08 Z M48.53 12.13 h9.15 v3.08 h-9.15 Z M60.66 12.13 h3.08 v3.08 h-3.08 Z M0.00 15.16 h3.08 v3.08 h-3.08 Z M18.20 15.16 h3.08 v3.08 h-3.08 Z M24.26 15.16 h6.12 v3.08 h-6.12 Z M36.40 15.16 h3.08 v3.08 h-3.08 Z M42.46 15.16 h3.08 v3.08 h-3.08 Z M60.66 15.16 h3.08 v3.08 h-3.08 Z M0.00 18.20 h21.28 v3.08 h-21.28 Z M24.26 18.20 h3.08 v3.08 h-3.08 Z M30.33 18.20 h3.08 v3.08 h-3.08 Z M36.40 18.20 h3.08 v3.08 h-3.08 Z M42.46 18.20 h21.28 v3.08 h-21.28 Z M24.26 21.23 h6.12 v3.08 h-6.12 Z M33.36 21.23 h3.08 v3.08 h-3.08 Z M6.07 24.26 h9.15 v3.08 h-9.15 Z M18.20 24.26 h3.08 v3.08 h-3.08 Z M24.26 24.26 h3.08 v3.08 h-3.08 Z M30.33 24.26 h3.08 v3.08 h-3.08 Z M39.43 24.26 h9.15 v3.08 h-9.15 Z M54.59 24.26 h9.15 v3.08 h-9.15 Z M0.00 27.30 h6.12 v3.08 h-6.12 Z M9.10 27.30 h9.15 v3.08 h-9.15 Z M24.26 27.30 h3.08 v3.08 h-3.08 Z M33.36 27.30 h3.08 v3.08 h-3.08 Z M39.43 27.30 h9.15 v3.08 h-9.15 Z M51.56 27.30 h6.12 v3.08 h-6.12 Z M60.66 27.30 h3.08 v3.08 h-3.08 Z M0.00 30.33 h6.12 v3.08 h-6.12 Z M18.20 30.33 h3.08 v3.08 h-3.08 Z M27.30 30.33 h6.12 v3.08 h-6.12 Z M36.40 30.33 h6.12 v3.08 h-6.12 Z M48.53 30.33 h12.18 v3.08 h-12.18 Z M6.07 33.36 h6.12 v3.08 h-6.12 Z M21.23 33.36 h9.15 v3.08 h-9.15 Z M39.43 33.36 h3.08 v3.08 h-3.08 Z M45.49 33.36 h12.18 v3.08 h-12.18 Z M0.00 36.40 h21.28 v3.08 h-21.28 Z M42.46 36.40 h3.08 v3.08 h-3.08 Z M48.53 36.40 h6.12 v3.08 h-6.12 Z M57.63 36.40 h3.08 v3.08 h-3.08 Z M24.26 39.43 h3.08 v3.08 h-3.08 Z M30.33 39.43 h3.08 v3.08 h-3.08 Z M39.43 39.43 h3.08 v3.08 h-3.08 Z M54.59 39.43 h9.15 v3.08 h-9.15 Z M0.00 42.46 h21.28 v3.08 h-21.28 Z M42.46 42.46 h6.12 v3.08 h-6.12 Z M51.56 42.46 h3.08 v3.08 h-3.08 Z M57.63 42.46 h3.08 v3.08 h-3.08 Z M0.00 45.49 h3.08 v3.08 h-3.08 Z M18.20 45.49 h3.08 v3.08 h-3.08 Z M27.30 45.49 h9.15 v3.08 h-9.15 Z M39.43 45.49 h6.12 v3.08 h-6.12 Z M51.56 45.49 h6.12 v3.08 h-6.12 Z M0.00 48.53 h3.08 v3.08 h-3.08 Z M6.07 48.53 h9.15 v3.08 h-9.15 Z M18.20 48.53 h3.08 v3.08 h-3.08 Z M24.26 48.53 h6.12 v3.08 h-6.12 Z M33.36 48.53 h3.08 v3.08 h-3.08 Z M45.49 48.53 h3.08 v3.08 h-3.08 Z M51.56 48.53 h3.08 v3.08 h-3.08 Z M57.63 48.53 h3.08 v3.08 h-3.08 Z M0.00 51.56 h3.08 v3.08 h-3.08 Z M6.07 51.56 h9.15 v3.08 h-9.15 Z M18.20 51.56 h3.08 v3.08 h-3.08 Z M24.26 51.56 h6.12 v3.08 h-6.12 Z M33.36 51.56 h15.21 v3.08 h-15.21 Z M51.56 51.56 h6.12 v3.08 h-6.12 Z M0.00 54.59 h3.08 v3.08 h-3.08 Z M6.07 54.59 h9.15 v3.08 h-9.15 Z M18.20 54.59 h3.08 v3.08 h-3.08 Z M24.26 54.59 h9.15 v3.08 h-9.15 Z M36.40 54.59 h9.15 v3.08 h-9.15 Z M48.53 54.59 h3.08 v3.08 h-3.08 Z M54.59 54.59 h3.08 v3.08 h-3.08 Z M0.00 57.63 h3.08 v3.08 h-3.08 Z M18.20 57.63 h3.08 v3.08 h-3.08 Z M27.30 57.63 h6.12 v3.08 h-6.12 Z M36.40 57.63 h3.08 v3.08 h-3.08 Z M42.46 57.63 h9.15 v3.08 h-9.15 Z M54.59 57.63 h3.08 v3.08 h-3.08 Z M0.00 60.66 h21.28 v3.08 h-21.28 Z M27.30 60.66 h3.08 v3.08 h-3.08 Z M39.43 60.66 h3.08 v3.08 h-3.08 Z M48.53 60.66 h3.08 v3.08 h-3.08 Z M54.59 60.66 h6.12 v3.08 h-6.12 Z" fill="#000" shape-rendering="crispEdges"/></svg>
<div class="b" style="left:731.00px;top:131.00px;width:160.00px;height:274.00px;background:#fff;"></div>
<div class="b" style="left:721.20px;top:130.00px;width:10.80px;height:21.00px;background:#fff;"></div>
<svg class="b" style="left:724.10px;top:138.20px;" width="5" height="5.6" viewBox="0 0 5 5.6"><path d="M0.4 0.5 L2.4 2.8 L0.4 5.1 M2.5 0.5 L4.5 2.8 L2.5 5.1" fill="none" stroke="#3a3a3a" stroke-width="1.15"/></svg>
<div class="b" style="left:890.50px;top:129.40px;width:4.80px;height:276.00px;background:#f0f0f0;"></div>
<div class="b" style="left:891.20px;top:157.40px;width:2.70px;height:248.00px;background:#d6d6d6;"></div>
<span class="t" style="left:743.60px;top:134.91px;font-size:8.7px;line-height:12.18px;color:#19b3a5;">属性</span>
<div class="b" style="left:743.60px;top:149.60px;width:17.60px;height:1.50px;background:#19b3a5;"></div>
<span class="t" style="left:770.00px;top:134.91px;font-size:8.7px;line-height:12.18px;color:#333;">数据源</span>
<span class="t" style="left:805.00px;top:134.94px;font-size:8.65px;line-height:12.11px;color:#333;">打印设置</span>
<span class="t" style="left:848.40px;top:134.94px;font-size:8.65px;line-height:12.11px;color:#333;">元素布局</span>
<span class="t" style="left:741.20px;top:155.52px;font-size:7.4px;line-height:10.36px;color:#333;">文本内容</span>
<div class="b" style="left:741.00px;top:168.00px;width:144.50px;height:0.60px;background:#f2f2f2;"></div>
<span class="t" style="left:741.20px;top:179.62px;font-size:7.4px;line-height:10.36px;color:#333;">文本内容</span>
<span class="t" style="left:785.20px;top:179.73px;font-size:7.25px;line-height:10.15px;color:#666;letter-spacing:0.15px;">=表头表尾详细字段.客户:</span>
<div class="b" style="left:876.00px;top:181.20px;width:1.50px;height:1.50px;background:#333;border-radius:1px;"></div>
<div class="b" style="left:879.20px;top:181.20px;width:1.50px;height:1.50px;background:#333;border-radius:1px;"></div>
<div class="b" style="left:882.40px;top:181.20px;width:1.50px;height:1.50px;background:#333;border-radius:1px;"></div>
<div class="b" style="left:778.00px;top:192.00px;width:107.40px;height:0.70px;background:#d6d6d6;"></div>
<span class="t" style="left:741.20px;top:200.62px;font-size:7.4px;line-height:10.36px;color:#333;">边框</span>
<div class="b" style="left:741.00px;top:214.60px;width:144.50px;height:0.60px;background:#f3f3f3;"></div>
<span class="t" style="left:741.20px;top:225.92px;font-size:7.4px;line-height:10.36px;color:#333;">位置</span>
<svg class="b" style="left:763.40px;top:225.40px;" width="9.0" height="8.8" viewBox="0 0 9.0 8.8"><rect x="0.6" y="0.6" width="7.8" height="7.6000000000000005" rx="1.6" fill="none" stroke="#333" stroke-width="1.2"/></svg>
<svg class="b" style="left:779.40px;top:225.40px;" width="9.0" height="8.8" viewBox="0 0 9.0 8.8"><rect x="0.5" y="0.5" width="8.0" height="7.800000000000001" rx="1.6" fill="none" stroke="#7c7c7c" stroke-width="0.8" stroke-dasharray="1.3 1"/><path d="M0.6 1 V7.800000000000001" stroke="#333" stroke-width="1.2"/></svg>
<svg class="b" style="left:795.60px;top:225.40px;" width="9.0" height="8.8" viewBox="0 0 9.0 8.8"><rect x="0.5" y="0.5" width="8.0" height="7.800000000000001" rx="1.6" fill="none" stroke="#7c7c7c" stroke-width="0.8" stroke-dasharray="1.3 1"/><path d="M1 0.6 H8.0" stroke="#333" stroke-width="1.2"/></svg>
<svg class="b" style="left:812.00px;top:225.40px;" width="9.0" height="8.8" viewBox="0 0 9.0 8.8"><rect x="0.5" y="0.5" width="8.0" height="7.800000000000001" rx="1.6" fill="none" stroke="#7c7c7c" stroke-width="0.8" stroke-dasharray="1.3 1"/><path d="M8.4 1 V7.800000000000001" stroke="#333" stroke-width="1.2"/></svg>
<svg class="b" style="left:827.80px;top:225.40px;" width="9.0" height="8.8" viewBox="0 0 9.0 8.8"><rect x="0.5" y="0.5" width="8.0" height="7.800000000000001" rx="1.6" fill="none" stroke="#7c7c7c" stroke-width="0.8" stroke-dasharray="1.3 1"/><path d="M1 8.200000000000001 H8.0" stroke="#333" stroke-width="1.2"/></svg>
<span class="t" style="left:741.20px;top:247.22px;font-size:7.4px;line-height:10.36px;color:#333;">样式</span>
<div class="b" style="left:764.20px;top:250.90px;width:55.20px;height:0.80px;background:#888;"></div>
<svg class="b" style="left:824.60px;top:249.80px;" width="6" height="3.2" viewBox="0 0 6 3.2"><path d="M0.3 0.3 L3.0 2.9000000000000004 L5.7 0.3" fill="none" stroke="#aaa" stroke-width="0.7"/></svg>
<div class="b" style="left:763.50px;top:258.30px;width:68.30px;height:0.70px;background:#d6d6d6;"></div>
<span class="t" style="left:842.40px;top:244.72px;font-size:8.4px;line-height:11.76px;color:#444;">1</span>
<div class="b" style="left:840.50px;top:258.30px;width:44.20px;height:0.70px;background:#d6d6d6;"></div>
<svg class="b" style="left:879.80px;top:245.90px;" width="4.4" height="2.8" viewBox="0 0 4.4 2.8"><path d="M0 2.8 L2.2 0 L4.4 2.8 Z" fill="#bbb"/></svg>
<svg class="b" style="left:879.80px;top:252.90px;" width="4.4" height="2.8" viewBox="0 0 4.4 2.8"><path d="M0 0 L2.2 2.8 L4.4 0 Z" fill="#bbb"/></svg>
<span class="t" style="left:741.20px;top:267.22px;font-size:7.4px;line-height:10.36px;color:#333;">布局</span>
<div class="b" style="left:741.00px;top:279.60px;width:144.50px;height:0.60px;background:#f0f0f0;"></div>
<span class="t" style="left:741.80px;top:291.92px;font-size:7.4px;line-height:10.36px;color:#333;">坐标</span>
<span class="t" style="left:763.00px;top:291.92px;font-size:7.4px;line-height:10.36px;color:#333;">左</span>
<span class="t" style="left:777.30px;top:289.72px;font-size:8.4px;line-height:11.76px;color:#444;">399</span>
<div class="b" style="left:776.70px;top:302.90px;width:52.60px;height:0.70px;background:#d6d6d6;"></div>
<svg class="b" style="left:823.90px;top:291.30px;" width="4.4" height="2.8" viewBox="0 0 4.4 2.8"><path d="M0 2.8 L2.2 0 L4.4 2.8 Z" fill="#bbb"/></svg>
<svg class="b" style="left:823.90px;top:297.60px;" width="4.4" height="2.8" viewBox="0 0 4.4 2.8"><path d="M0 0 L2.2 2.8 L4.4 0 Z" fill="#bbb"/></svg>
<span class="t" style="left:840.50px;top:294.92px;font-size:7.4px;line-height:10.36px;color:#222;">像素</span>
<svg class="b" style="left:879.00px;top:294.20px;" width="6" height="3.2" viewBox="0 0 6 3.2"><path d="M0.3 0.3 L3.0 2.9000000000000004 L5.7 0.3" fill="none" stroke="#aaa" stroke-width="0.7"/></svg>
<div class="b" style="left:840.50px;top:302.90px;width:44.20px;height:0.70px;background:#d6d6d6;"></div>
<span class="t" style="left:763.00px;top:308.52px;font-size:7.4px;line-height:10.36px;color:#333;">上</span>
<span class="t" style="left:777.30px;top:306.32px;font-size:8.4px;line-height:11.76px;color:#444;">104</span>
<div class="b" style="left:776.70px;top:319.50px;width:52.60px;height:0.70px;background:#d6d6d6;"></div>
<svg class="b" style="left:823.90px;top:307.90px;" width="4.4" height="2.8" viewBox="0 0 4.4 2.8"><path d="M0 2.8 L2.2 0 L4.4 2.8 Z" fill="#bbb"/></svg>
<svg class="b" style="left:823.90px;top:314.20px;" width="4.4" height="2.8" viewBox="0 0 4.4 2.8"><path d="M0 0 L2.2 2.8 L4.4 0 Z" fill="#bbb"/></svg>
<span class="t" style="left:840.50px;top:311.52px;font-size:7.4px;line-height:10.36px;color:#222;">像素</span>
<svg class="b" style="left:879.00px;top:310.80px;" width="6" height="3.2" viewBox="0 0 6 3.2"><path d="M0.3 0.3 L3.0 2.9000000000000004 L5.7 0.3" fill="none" stroke="#aaa" stroke-width="0.7"/></svg>
<div class="b" style="left:840.50px;top:319.50px;width:44.20px;height:0.70px;background:#d6d6d6;"></div>
<span class="t" style="left:741.80px;top:331.62px;font-size:7.4px;line-height:10.36px;color:#333;">尺寸</span>
<span class="t" style="left:763.00px;top:331.62px;font-size:7.4px;line-height:10.36px;color:#333;">宽</span>
<span class="t" style="left:777.30px;top:329.42px;font-size:8.4px;line-height:11.76px;color:#444;">169</span>
<div class="b" style="left:776.70px;top:342.60px;width:52.60px;height:0.70px;background:#d6d6d6;"></div>
<svg class="b" style="left:823.90px;top:331.00px;" width="4.4" height="2.8" viewBox="0 0 4.4 2.8"><path d="M0 2.8 L2.2 0 L4.4 2.8 Z" fill="#bbb"/></svg>
<svg class="b" style="left:823.90px;top:337.30px;" width="4.4" height="2.8" viewBox="0 0 4.4 2.8"><path d="M0 0 L2.2 2.8 L4.4 0 Z" fill="#bbb"/></svg>
<span class="t" style="left:840.50px;top:334.62px;font-size:7.4px;line-height:10.36px;color:#222;">像素</span>
<svg class="b" style="left:879.00px;top:333.90px;" width="6" height="3.2" viewBox="0 0 6 3.2"><path d="M0.3 0.3 L3.0 2.9000000000000004 L5.7 0.3" fill="none" stroke="#aaa" stroke-width="0.7"/></svg>
<div class="b" style="left:840.50px;top:342.60px;width:44.20px;height:0.70px;background:#d6d6d6;"></div>
<span class="t" style="left:763.00px;top:347.62px;font-size:7.4px;line-height:10.36px;color:#333;">高</span>
<span class="t" style="left:777.30px;top:345.42px;font-size:8.4px;line-height:11.76px;color:#444;">18</span>
<div class="b" style="left:776.70px;top:358.60px;width:52.60px;height:0.70px;background:#d6d6d6;"></div>
<svg class="b" style="left:823.90px;top:347.00px;" width="4.4" height="2.8" viewBox="0 0 4.4 2.8"><path d="M0 2.8 L2.2 0 L4.4 2.8 Z" fill="#bbb"/></svg>
<svg class="b" style="left:823.90px;top:353.30px;" width="4.4" height="2.8" viewBox="0 0 4.4 2.8"><path d="M0 0 L2.2 2.8 L4.4 0 Z" fill="#bbb"/></svg>
<span class="t" style="left:840.50px;top:350.62px;font-size:7.4px;line-height:10.36px;color:#222;">像素</span>
<svg class="b" style="left:879.00px;top:349.90px;" width="6" height="3.2" viewBox="0 0 6 3.2"><path d="M0.3 0.3 L3.0 2.9000000000000004 L5.7 0.3" fill="none" stroke="#aaa" stroke-width="0.7"/></svg>
<div class="b" style="left:840.50px;top:358.60px;width:44.20px;height:0.70px;background:#d6d6d6;"></div>
<span class="t" style="left:741.20px;top:368.75px;font-size:7.35px;line-height:10.29px;color:#222;">锁定打印位置</span>
<div class="b" style="left:741.00px;top:382.00px;width:144.50px;height:0.60px;background:#f0f0f0;"></div>
<span class="t" style="left:741.20px;top:392.25px;font-size:7.35px;line-height:10.29px;color:#222;">锁定打印位置</span>
<div class="b" style="left:857.70px;top:390.30px;width:27.80px;height:11.00px;background:#9c9c9c;border-radius:5.5px;"></div>
<div class="b" style="left:858.60px;top:391.10px;width:10.60px;height:9.60px;background:#fff;border-radius:5px;"></div>
<div class="b" style="left:733.00px;top:396.80px;width:125.00px;height:3.60px;background:rgba(0,0,0,0.2);"></div>
<div class="b" style="left:894.00px;top:361.60px;width:6.00px;height:44.00px;background:#468b63;border-radius:3px 3px 0 0;border:0.6px solid #356b4b;"></div>
<div class="b" style="left:894.00px;top:361.60px;width:6.00px;height:12.20px;background:#575757;border-radius:3px 3px 0 0;"></div>
<div class="b" style="left:725.00px;top:403.40px;width:170.00px;height:2.00px;background:#fff;"></div>
<div class="b" style="left:730.00px;top:130.20px;width:161.20px;height:273.60px;border:3.2px solid #d9281d;border-radius:3px;"></div>
<span class="t" style="left:29.80px;top:19.27px;font-size:16.9px;line-height:23.66px;color:#000;opacity:0.09;-webkit-text-stroke:0.45px #000;">电话：</span>
<span class="t" style="left:86.40px;top:18.02px;font-size:18.4px;line-height:25.76px;color:#000;letter-spacing:2.85px;opacity:0.09;-webkit-text-stroke:0.45px #000;">400-665-0028</span>
<span class="t" style="left:29.80px;top:48.47px;font-size:16.9px;line-height:23.66px;color:#000;opacity:0.09;-webkit-text-stroke:0.45px #000;">网址：</span>
<span class="t" style="left:86.00px;top:46.62px;font-size:18.4px;line-height:25.76px;color:#000;letter-spacing:0.95px;opacity:0.09;-webkit-text-stroke:0.45px #000;">www.chanjet.net</span>
<span class="t" style="left:301.00px;top:19.27px;font-size:16.9px;line-height:23.66px;color:#000;opacity:0.09;-webkit-text-stroke:0.45px #000;">电话：</span>
<span class="t" style="left:357.60px;top:18.02px;font-size:18.4px;line-height:25.76px;color:#000;letter-spacing:2.85px;opacity:0.09;-webkit-text-stroke:0.45px #000;">400-665-0028</span>
<span class="t" style="left:301.00px;top:48.47px;font-size:16.9px;line-height:23.66px;color:#000;opacity:0.09;-webkit-text-stroke:0.45px #000;">网址：</span>
<span class="t" style="left:357.20px;top:46.62px;font-size:18.4px;line-height:25.76px;color:#000;letter-spacing:0.95px;opacity:0.09;-webkit-text-stroke:0.45px #000;">www.chanjet.net</span>
<span class="t" style="left:572.20px;top:19.27px;font-size:16.9px;line-height:23.66px;color:#000;opacity:0.09;-webkit-text-stroke:0.45px #000;">电话：</span>
<span class="t" style="left:628.80px;top:18.02px;font-size:18.4px;line-height:25.76px;color:#000;letter-spacing:2.85px;opacity:0.09;-webkit-text-stroke:0.45px #000;">400-665-0028</span>
<span class="t" style="left:572.20px;top:48.47px;font-size:16.9px;line-height:23.66px;color:#000;opacity:0.09;-webkit-text-stroke:0.45px #000;">网址：</span>
<span class="t" style="left:628.40px;top:46.62px;font-size:18.4px;line-height:25.76px;color:#000;letter-spacing:0.95px;opacity:0.09;-webkit-text-stroke:0.45px #000;">www.chanjet.net</span>
<span class="t" style="left:843.40px;top:19.27px;font-size:16.9px;line-height:23.66px;color:#000;opacity:0.09;-webkit-text-stroke:0.45px #000;">电话：</span>
<span class="t" style="left:900.00px;top:18.02px;font-size:18.4px;line-height:25.76px;color:#000;letter-spacing:2.85px;opacity:0.09;-webkit-text-stroke:0.45px #000;">400-665-0028</span>
<span class="t" style="left:843.40px;top:48.47px;font-size:16.9px;line-height:23.66px;color:#000;opacity:0.09;-webkit-text-stroke:0.45px #000;">网址：</span>
<span class="t" style="left:899.60px;top:46.62px;font-size:18.4px;line-height:25.76px;color:#000;letter-spacing:0.95px;opacity:0.09;-webkit-text-stroke:0.45px #000;">www.chanjet.net</span>
<span class="t" style="left:29.80px;top:129.27px;font-size:16.9px;line-height:23.66px;color:#000;opacity:0.09;-webkit-text-stroke:0.45px #000;">电话：</span>
<span class="t" style="left:86.40px;top:128.02px;font-size:18.4px;line-height:25.76px;color:#000;letter-spacing:2.85px;opacity:0.09;-webkit-text-stroke:0.45px #000;">400-665-0028</span>
<span class="t" style="left:29.80px;top:158.47px;font-size:16.9px;line-height:23.66px;color:#000;opacity:0.09;-webkit-text-stroke:0.45px #000;">网址：</span>
<span class="t" style="left:86.00px;top:156.62px;font-size:18.4px;line-height:25.76px;color:#000;letter-spacing:0.95px;opacity:0.09;-webkit-text-stroke:0.45px #000;">www.chanjet.net</span>
<span class="t" style="left:301.00px;top:129.27px;font-size:16.9px;line-height:23.66px;color:#000;opacity:0.09;-webkit-text-stroke:0.45px #000;">电话：</span>
<span class="t" style="left:357.60px;top:128.02px;font-size:18.4px;line-height:25.76px;color:#000;letter-spacing:2.85px;opacity:0.09;-webkit-text-stroke:0.45px #000;">400-665-0028</span>
<span class="t" style="left:301.00px;top:158.47px;font-size:16.9px;line-height:23.66px;color:#000;opacity:0.09;-webkit-text-stroke:0.45px #000;">网址：</span>
<span class="t" style="left:357.20px;top:156.62px;font-size:18.4px;line-height:25.76px;color:#000;letter-spacing:0.95px;opacity:0.09;-webkit-text-stroke:0.45px #000;">www.chanjet.net</span>
<span class="t" style="left:572.20px;top:129.27px;font-size:16.9px;line-height:23.66px;color:#000;opacity:0.09;-webkit-text-stroke:0.45px #000;">电话：</span>
<span class="t" style="left:628.80px;top:128.02px;font-size:18.4px;line-height:25.76px;color:#000;letter-spacing:2.85px;opacity:0.09;-webkit-text-stroke:0.45px #000;">400-665-0028</span>
<span class="t" style="left:572.20px;top:158.47px;font-size:16.9px;line-height:23.66px;color:#000;opacity:0.09;-webkit-text-stroke:0.45px #000;">网址：</span>
<span class="t" style="left:628.40px;top:156.62px;font-size:18.4px;line-height:25.76px;color:#000;letter-spacing:0.95px;opacity:0.09;-webkit-text-stroke:0.45px #000;">www.chanjet.net</span>
<span class="t" style="left:843.40px;top:129.27px;font-size:16.9px;line-height:23.66px;color:#000;opacity:0.09;-webkit-text-stroke:0.45px #000;">电话：</span>
<span class="t" style="left:900.00px;top:128.02px;font-size:18.4px;line-height:25.76px;color:#000;letter-spacing:2.85px;opacity:0.09;-webkit-text-stroke:0.45px #000;">400-665-0028</span>
<span class="t" style="left:843.40px;top:158.47px;font-size:16.9px;line-height:23.66px;color:#000;opacity:0.09;-webkit-text-stroke:0.45px #000;">网址：</span>
<span class="t" style="left:899.60px;top:156.62px;font-size:18.4px;line-height:25.76px;color:#000;letter-spacing:0.95px;opacity:0.09;-webkit-text-stroke:0.45px #000;">www.chanjet.net</span>
<span class="t" style="left:29.80px;top:239.27px;font-size:16.9px;line-height:23.66px;color:#000;opacity:0.09;-webkit-text-stroke:0.45px #000;">电话：</span>
<span class="t" style="left:86.40px;top:238.02px;font-size:18.4px;line-height:25.76px;color:#000;letter-spacing:2.85px;opacity:0.09;-webkit-text-stroke:0.45px #000;">400-665-0028</span>
<span class="t" style="left:29.80px;top:268.47px;font-size:16.9px;line-height:23.66px;color:#000;opacity:0.09;-webkit-text-stroke:0.45px #000;">网址：</span>
<span class="t" style="left:86.00px;top:266.62px;font-size:18.4px;line-height:25.76px;color:#000;letter-spacing:0.95px;opacity:0.09;-webkit-text-stroke:0.45px #000;">www.chanjet.net</span>
<span class="t" style="left:301.00px;top:239.27px;font-size:16.9px;line-height:23.66px;color:#000;opacity:0.09;-webkit-text-stroke:0.45px #000;">电话：</span>
<span class="t" style="left:357.60px;top:238.02px;font-size:18.4px;line-height:25.76px;color:#000;letter-spacing:2.85px;opacity:0.09;-webkit-text-stroke:0.45px #000;">400-665-0028</span>
<span class="t" style="left:301.00px;top:268.47px;font-size:16.9px;line-height:23.66px;color:#000;opacity:0.09;-webkit-text-stroke:0.45px #000;">网址：</span>
<span class="t" style="left:357.20px;top:266.62px;font-size:18.4px;line-height:25.76px;color:#000;letter-spacing:0.95px;opacity:0.09;-webkit-text-stroke:0.45px #000;">www.chanjet.net</span>
<span class="t" style="left:572.20px;top:239.27px;font-size:16.9px;line-height:23.66px;color:#000;opacity:0.09;-webkit-text-stroke:0.45px #000;">电话：</span>
<span class="t" style="left:628.80px;top:238.02px;font-size:18.4px;line-height:25.76px;color:#000;letter-spacing:2.85px;opacity:0.09;-webkit-text-stroke:0.45px #000;">400-665-0028</span>
<span class="t" style="left:572.20px;top:268.47px;font-size:16.9px;line-height:23.66px;color:#000;opacity:0.09;-webkit-text-stroke:0.45px #000;">网址：</span>
<span class="t" style="left:628.40px;top:266.62px;font-size:18.4px;line-height:25.76px;color:#000;letter-spacing:0.95px;opacity:0.09;-webkit-text-stroke:0.45px #000;">www.chanjet.net</span>
<span class="t" style="left:843.40px;top:239.27px;font-size:16.9px;line-height:23.66px;color:#000;opacity:0.09;-webkit-text-stroke:0.45px #000;">电话：</span>
<span class="t" style="left:900.00px;top:238.02px;font-size:18.4px;line-height:25.76px;color:#000;letter-spacing:2.85px;opacity:0.09;-webkit-text-stroke:0.45px #000;">400-665-0028</span>
<span class="t" style="left:843.40px;top:268.47px;font-size:16.9px;line-height:23.66px;color:#000;opacity:0.09;-webkit-text-stroke:0.45px #000;">网址：</span>
<span class="t" style="left:899.60px;top:266.62px;font-size:18.4px;line-height:25.76px;color:#000;letter-spacing:0.95px;opacity:0.09;-webkit-text-stroke:0.45px #000;">www.chanjet.net</span>
<span class="t" style="left:29.80px;top:349.27px;font-size:16.9px;line-height:23.66px;color:#000;opacity:0.09;-webkit-text-stroke:0.45px #000;">电话：</span>
<span class="t" style="left:86.40px;top:348.02px;font-size:18.4px;line-height:25.76px;color:#000;letter-spacing:2.85px;opacity:0.09;-webkit-text-stroke:0.45px #000;">400-665-0028</span>
<span class="t" style="left:29.80px;top:378.47px;font-size:16.9px;line-height:23.66px;color:#000;opacity:0.09;-webkit-text-stroke:0.45px #000;">网址：</span>
<span class="t" style="left:86.00px;top:376.62px;font-size:18.4px;line-height:25.76px;color:#000;letter-spacing:0.95px;opacity:0.09;-webkit-text-stroke:0.45px #000;">www.chanjet.net</span>
<span class="t" style="left:301.00px;top:349.27px;font-size:16.9px;line-height:23.66px;color:#000;opacity:0.09;-webkit-text-stroke:0.45px #000;">电话：</span>
<span class="t" style="left:357.60px;top:348.02px;font-size:18.4px;line-height:25.76px;color:#000;letter-spacing:2.85px;opacity:0.09;-webkit-text-stroke:0.45px #000;">400-665-0028</span>
<span class="t" style="left:301.00px;top:378.47px;font-size:16.9px;line-height:23.66px;color:#000;opacity:0.09;-webkit-text-stroke:0.45px #000;">网址：</span>
<span class="t" style="left:357.20px;top:376.62px;font-size:18.4px;line-height:25.76px;color:#000;letter-spacing:0.95px;opacity:0.09;-webkit-text-stroke:0.45px #000;">www.chanjet.net</span>
<span class="t" style="left:572.20px;top:349.27px;font-size:16.9px;line-height:23.66px;color:#000;opacity:0.09;-webkit-text-stroke:0.45px #000;">电话：</span>
<span class="t" style="left:628.80px;top:348.02px;font-size:18.4px;line-height:25.76px;color:#000;letter-spacing:2.85px;opacity:0.09;-webkit-text-stroke:0.45px #000;">400-665-0028</span>
<span class="t" style="left:572.20px;top:378.47px;font-size:16.9px;line-height:23.66px;color:#000;opacity:0.09;-webkit-text-stroke:0.45px #000;">网址：</span>
<span class="t" style="left:628.40px;top:376.62px;font-size:18.4px;line-height:25.76px;color:#000;letter-spacing:0.95px;opacity:0.09;-webkit-text-stroke:0.45px #000;">www.chanjet.net</span>
<span class="t" style="left:843.40px;top:349.27px;font-size:16.9px;line-height:23.66px;color:#000;opacity:0.09;-webkit-text-stroke:0.45px #000;">电话：</span>
<span class="t" style="left:900.00px;top:348.02px;font-size:18.4px;line-height:25.76px;color:#000;letter-spacing:2.85px;opacity:0.09;-webkit-text-stroke:0.45px #000;">400-665-0028</span>
<span class="t" style="left:843.40px;top:378.47px;font-size:16.9px;line-height:23.66px;color:#000;opacity:0.09;-webkit-text-stroke:0.45px #000;">网址：</span>
<span class="t" style="left:899.60px;top:376.62px;font-size:18.4px;line-height:25.76px;color:#000;letter-spacing:0.95px;opacity:0.09;-webkit-text-stroke:0.45px #000;">www.chanjet.net</span>
</div></body></html>
